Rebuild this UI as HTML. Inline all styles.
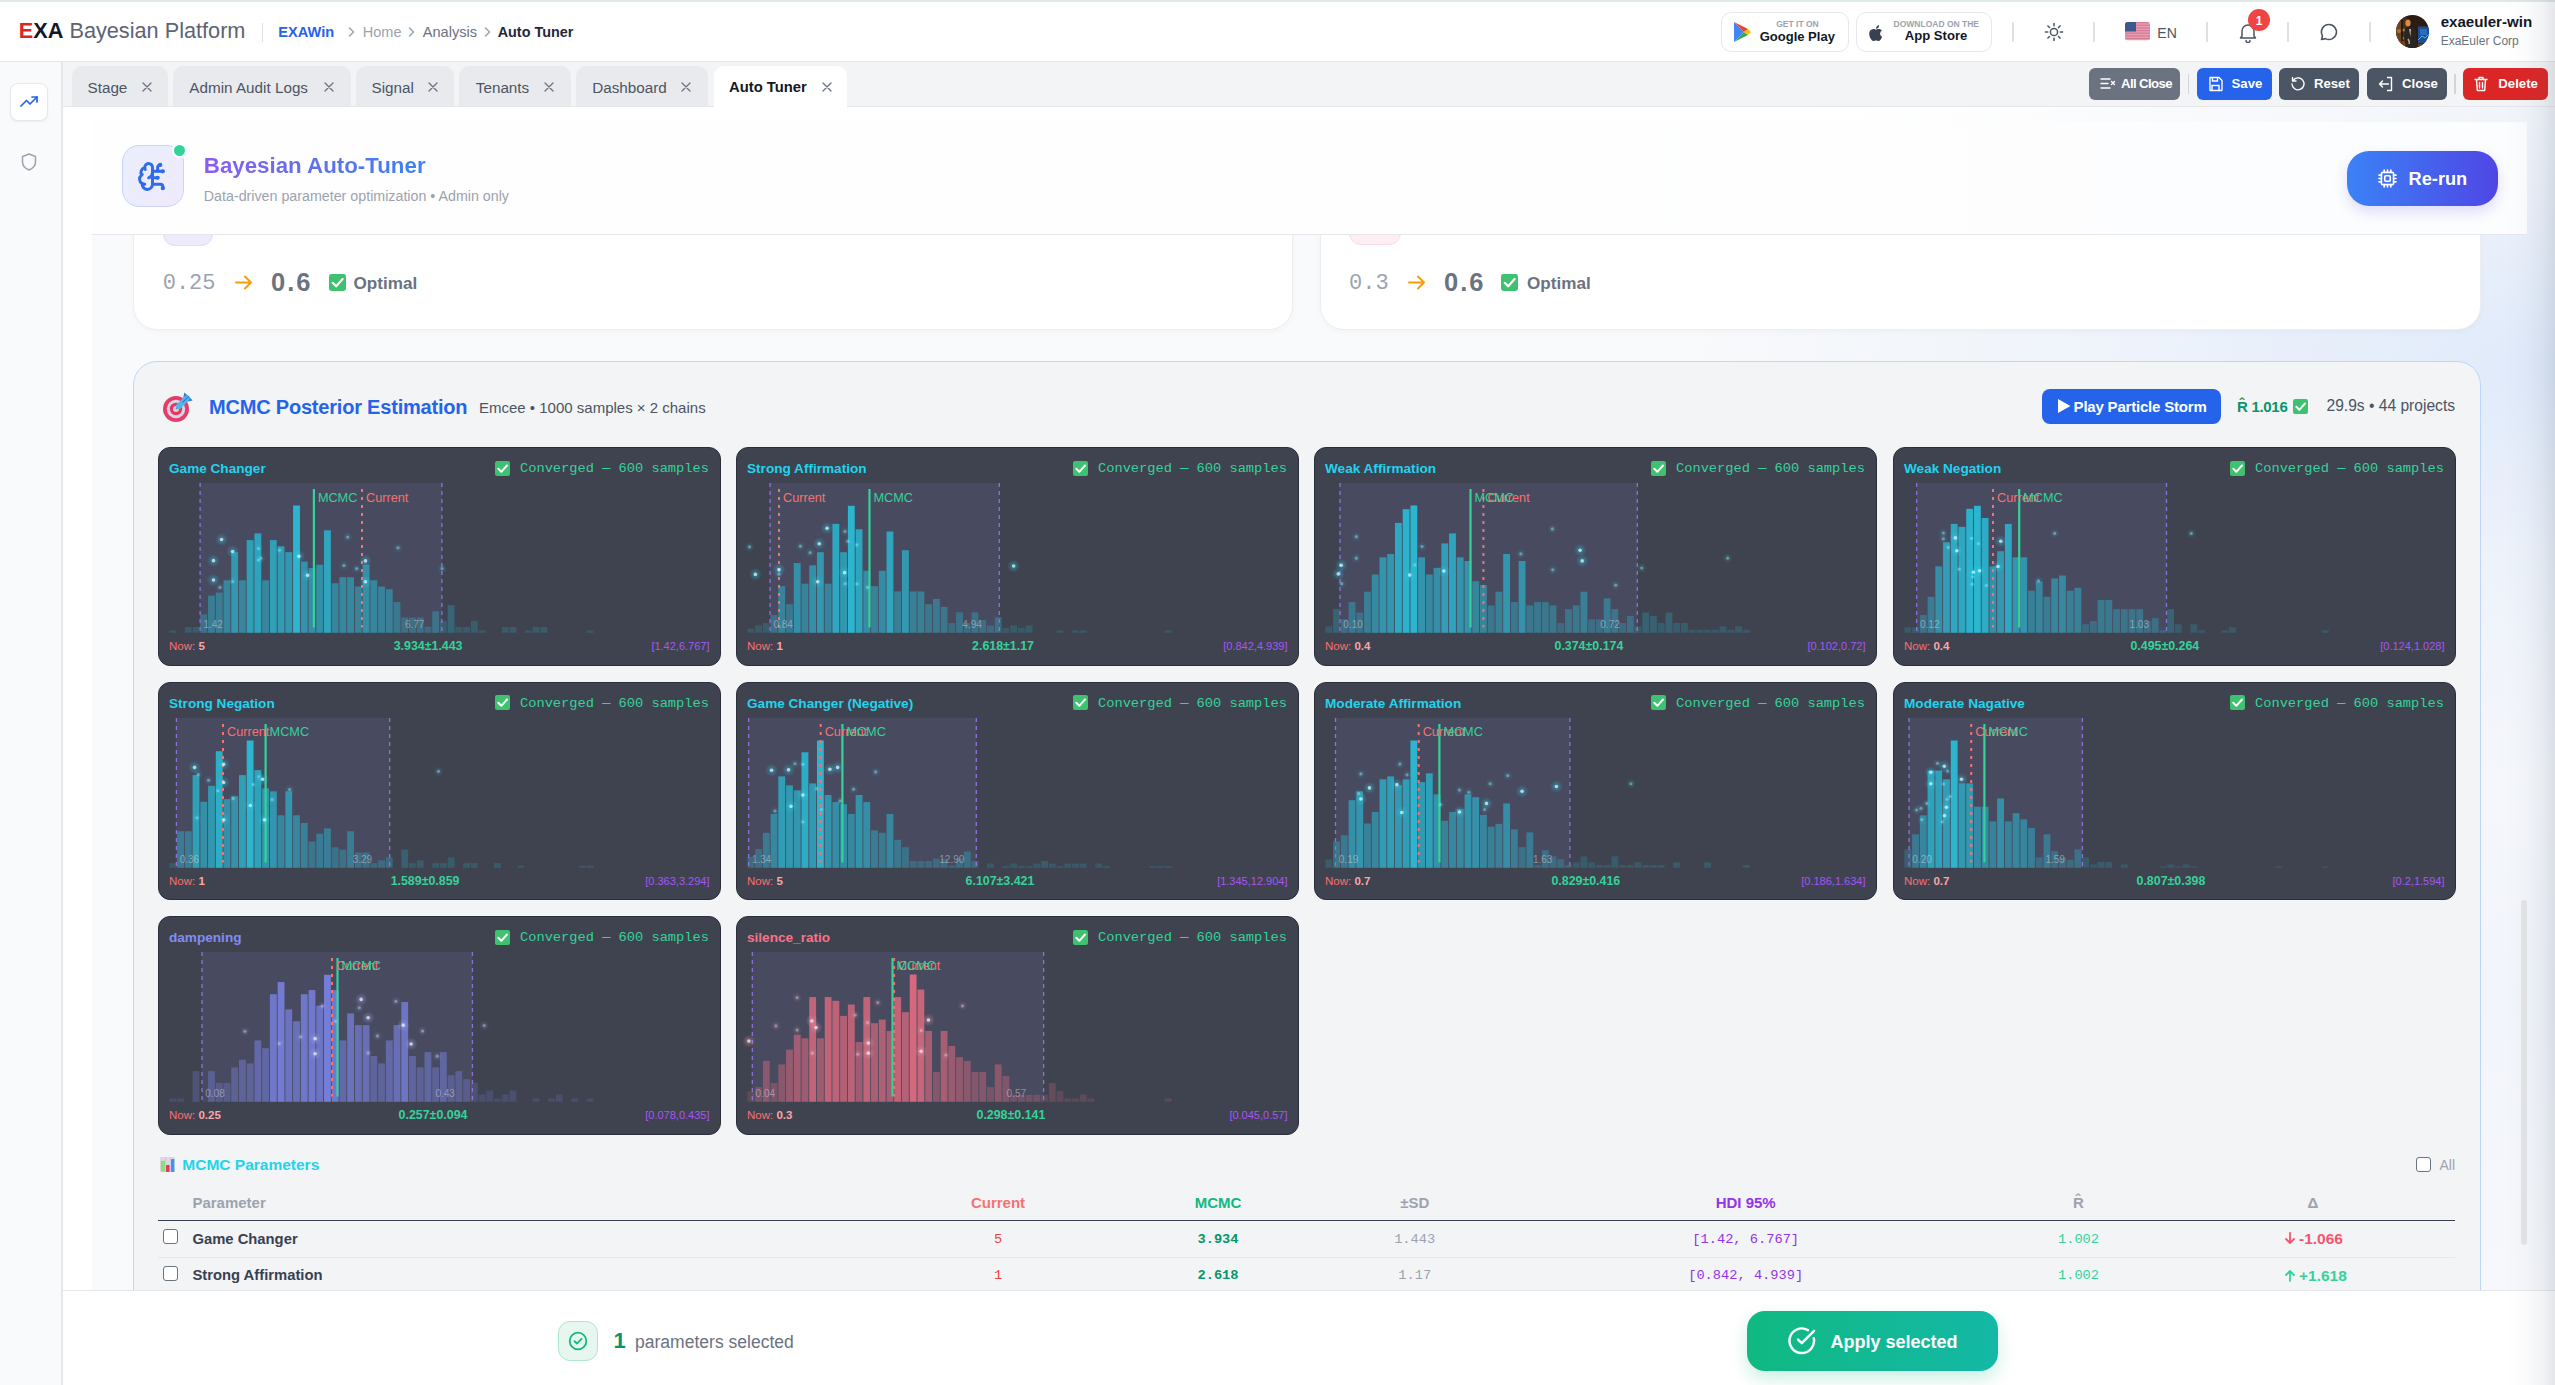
<!DOCTYPE html>
<html><head><meta charset="utf-8"><style>
*{box-sizing:border-box;margin:0;padding:0}
html,body{width:2555px;height:1385px;overflow:hidden;background:#fff;font-family:"Liberation Sans",sans-serif;color:#111827}
.a{position:absolute}
.t{position:absolute;white-space:nowrap;line-height:1}
.mono{font-family:"Liberation Mono",monospace}
.tab{position:absolute;top:66px;height:40px;background:#e9eaee;border-radius:10px 10px 0 0}
.tab.act{background:#fff;height:41px}
.btn{position:absolute;top:68px;height:32px;border-radius:6px}
.sep{position:absolute;width:2px;background:#d9dce1}
.card{position:absolute;width:563px;height:218.5px;background:#3f4350;border:1px solid #2a2f3a;border-radius:12px;overflow:hidden}
</style></head>
<body>
<div class="a" style="left:0px;top:0px;width:2555px;height:2px;background:#dfe8e4"></div>
<div class="a" style="left:0px;top:2px;width:2555px;height:59px;background:#fff"></div>
<div class="a" style="left:0px;top:61px;width:2555px;height:1px;background:#e5e7eb"></div>
<div class="t" style="left:18.80px;top:20.33px;font-size:21.7px;"><b style="color:#dc2626">E</b><b style="color:#111827">XA</b><span style="color:#5b6472"> Bayesian Platform</span></div>
<div class="a" style="left:262px;top:23px;width:1.3px;height:19px;background:#dcdfe4"></div>
<div class="t" style="left:278.30px;top:25.14px;font-size:14.6px;color:#2563eb"><b>EXAWin</b></div>
<svg class="a" style="left:347.7px;top:26.5px;" width="7" height="10" viewBox="0 0 7 10"><path d="M1.5 1 L5.5 5 L1.5 9" fill="none" stroke="#9ca3af" stroke-width="1.5" stroke-linecap="round" stroke-linejoin="round"/></svg>
<svg class="a" style="left:407.9px;top:26.5px;" width="7" height="10" viewBox="0 0 7 10"><path d="M1.5 1 L5.5 5 L1.5 9" fill="none" stroke="#9ca3af" stroke-width="1.5" stroke-linecap="round" stroke-linejoin="round"/></svg>
<svg class="a" style="left:484.3px;top:26.5px;" width="7" height="10" viewBox="0 0 7 10"><path d="M1.5 1 L5.5 5 L1.5 9" fill="none" stroke="#9ca3af" stroke-width="1.5" stroke-linecap="round" stroke-linejoin="round"/></svg>
<div class="t" style="left:362.80px;top:25.23px;font-size:14.5px;color:#9ca3af">Home</div>
<div class="t" style="left:422.70px;top:25.14px;font-size:14.6px;color:#6b7280">Analysis</div>
<div class="t" style="left:497.70px;top:25.31px;font-size:14.4px;color:#1f2937"><b>Auto Tuner</b></div>
<div class="a" style="left:1721px;top:12px;width:128px;height:39.5px;border:1px solid #e5e7eb;border-radius:10px;background:#fff"></div>
<div class="a" style="left:1856px;top:12px;width:135.5px;height:39.5px;border:1px solid #e5e7eb;border-radius:10px;background:#fff"></div>
<svg class="a" style="left:1734px;top:22px;" width="17" height="20" viewBox="0 0 17 20"><path d="M0 0 L10 10 L0 20 Z" fill="#4285f4"/><path d="M0 0 L14 7 L10 10 Z" fill="#ea4335"/><path d="M0 20 L14 13 L10 10 Z" fill="#34a853"/><path d="M14 7 L17 10 L14 13 L10 10 Z" fill="#fbbc04"/></svg>
<div class="t" style="left:1797.50px;transform:translateX(-50%);top:20.10px;font-size:8.5px;color:#9ca3af"><b>GET IT ON</b></div>
<div class="t" style="left:1797.30px;transform:translateX(-50%);top:29.50px;font-size:13px;color:#111827"><b>Google Play</b></div>
<svg class="a" style="left:1869px;top:23px;" width="14" height="19" viewBox="0 0 14 19"><path d="M11.2 10.6c0-2 1.6-2.9 1.7-3-0.9-1.4-2.4-1.6-2.9-1.6-1.2-0.1-2.4 0.7-3 0.7-0.6 0-1.6-0.7-2.6-0.7C2.9 6.1 1.6 6.9 0.9 8.1c-1.4 2.4-0.4 6 1 8 0.7 1 1.5 2 2.5 2 1 0 1.4-0.6 2.600-0.6s1.5 0.6 2.6 0.6c1.1 0 1.800-1 2.4-2 0.8-1.100 1.100-2.2 1.1-2.3-0.1 0-2-0.8-2.1-3.2z" fill="#374151"/><path d="M9.300 4.700c0.5-0.7 0.9-1.6 0.8-2.500-0.8 0-1.700 0.5-2.300 1.200-0.5 0.600-0.900 1.500-0.800 2.400 0.900 0.100 1.700-0.400 2.300-1.100z" fill="#374151"/></svg>
<div class="t" style="left:1936.30px;transform:translateX(-50%);top:20.10px;font-size:8.5px;color:#9ca3af"><b>DOWNLOAD ON THE</b></div>
<div class="t" style="left:1936.00px;transform:translateX(-50%);top:29.41px;font-size:13.1px;color:#111827"><b>App Store</b></div>
<div class="a" style="left:2012.25px;top:22px;width:1.5px;height:20px;background:#dde0e5"></div>
<div class="a" style="left:2093.25px;top:22px;width:1.5px;height:20px;background:#dde0e5"></div>
<div class="a" style="left:2206.25px;top:22px;width:1.5px;height:20px;background:#dde0e5"></div>
<div class="a" style="left:2287.25px;top:22px;width:1.5px;height:20px;background:#dde0e5"></div>
<div class="a" style="left:2369.25px;top:22px;width:1.5px;height:20px;background:#dde0e5"></div>
<svg class="a" style="left:2044px;top:22px;" width="20" height="20" viewBox="0 0 20 20"><circle cx="10" cy="10" r="3.6" fill="none" stroke="#4b5563" stroke-width="1.5"/><line x1="16.30" y1="10.00" x2="18.60" y2="10.00" stroke="#4b5563" stroke-width="1.5" stroke-linecap="round"/><line x1="14.45" y1="14.45" x2="16.08" y2="16.08" stroke="#4b5563" stroke-width="1.5" stroke-linecap="round"/><line x1="10.00" y1="16.30" x2="10.00" y2="18.60" stroke="#4b5563" stroke-width="1.5" stroke-linecap="round"/><line x1="5.55" y1="14.45" x2="3.92" y2="16.08" stroke="#4b5563" stroke-width="1.5" stroke-linecap="round"/><line x1="3.70" y1="10.00" x2="1.40" y2="10.00" stroke="#4b5563" stroke-width="1.5" stroke-linecap="round"/><line x1="5.55" y1="5.55" x2="3.92" y2="3.92" stroke="#4b5563" stroke-width="1.5" stroke-linecap="round"/><line x1="10.00" y1="3.70" x2="10.00" y2="1.40" stroke="#4b5563" stroke-width="1.5" stroke-linecap="round"/><line x1="14.45" y1="5.55" x2="16.08" y2="3.92" stroke="#4b5563" stroke-width="1.5" stroke-linecap="round"/></svg>
<svg class="a" style="left:2125px;top:22.3px;" width="25" height="18.5" viewBox="0 0 25 18.5"><defs><clipPath id="fc"><rect x="0" y="0" width="25" height="18.5" rx="3"/></clipPath></defs><g clip-path="url(#fc)"><rect width="25" height="18.5" fill="#e8a0b4"/><rect y="0.00" width="25" height="1.32" fill="#d77a93"/><rect y="2.64" width="25" height="1.32" fill="#d77a93"/><rect y="5.28" width="25" height="1.32" fill="#d77a93"/><rect y="7.92" width="25" height="1.32" fill="#d77a93"/><rect y="10.56" width="25" height="1.32" fill="#d77a93"/><rect y="13.20" width="25" height="1.32" fill="#d77a93"/><rect y="15.84" width="25" height="1.32" fill="#d77a93"/><rect width="11" height="9.5" fill="#3c5a8c"/></g></svg>
<div class="t" style="left:2157.30px;top:25.65px;font-size:14px;color:#4b5563">EN</div>
<svg class="a" style="left:2238px;top:22px;" width="20" height="21" viewBox="0 0 20 21"><path d="M4 14 L4 9 A6 6 0 0 1 16 9 L16 14 L17.5 16 L2.5 16 Z" fill="none" stroke="#4b5563" stroke-width="1.5" stroke-linejoin="round"/><path d="M8 18.5 A2 2 0 0 0 12 18.5" fill="none" stroke="#4b5563" stroke-width="1.5" stroke-linecap="round"/></svg>
<div class="a" style="left:2248px;top:9px;width:22px;height:22px;background:#ef4444;border-radius:50%"></div>
<div class="t" style="left:2259.00px;transform:translateX(-50%);top:15.14px;font-size:12px;color:#fff"><b>1</b></div>
<svg class="a" style="left:2319px;top:22px;" width="20" height="20" viewBox="0 0 20 20"><path d="M10 2.5 A7.5 7.5 0 1 1 6.4 16.6 L2.5 17.5 L3.5 13.8 A7.5 7.5 0 0 1 10 2.5 Z" fill="none" stroke="#4b5563" stroke-width="1.6" stroke-linejoin="round"/></svg>
<svg class="a" style="left:2396px;top:15px;" width="33" height="33" viewBox="0 0 33 33"><defs><clipPath id="avc"><circle cx="16.5" cy="16.5" r="16.5"/></clipPath></defs><g clip-path="url(#avc)"><rect width="33" height="33" fill="#2a1c12"/><rect x="0" y="0" width="5" height="33" fill="#6a4524"/><rect x="7" y="0" width="4" height="33" fill="#4a3019"/><circle cx="3" cy="16" r="2" fill="#c98a40" opacity=".7"/><circle cx="8" cy="15" r="1.5" fill="#d9a050" opacity=".7"/><circle cx="8" cy="23" r="1.5" fill="#c98a40" opacity=".6"/><rect x="0" y="26" width="10" height="7" fill="#8a4a1a" opacity=".7"/><ellipse cx="12" cy="8" rx="2.6" ry="3.5" fill="#d98a4a"/><path d="M9 13 L16 12 L20 16 L21 33 L10 33 L8 22 Z" fill="#2b2522"/><path d="M13 14 L15 14 L14.5 22 Z" fill="#d8d0c0" opacity=".8"/><path d="M12 24 q2 3 1 5" stroke="#f0e0c0" stroke-width="1.5" fill="none" opacity=".7"/><rect x="22" y="11.5" width="11" height="17" fill="#1b4f95"/><rect x="24" y="14" width="7" height="6" fill="#2d76c8" opacity=".8"/><path d="M22 25 L26 21 L29 23 L33 19" stroke="#5ab0f0" stroke-width="1" fill="none"/><rect x="22" y="29" width="11" height="4" fill="#7a4a20" opacity=".8"/></g></svg>
<div class="t" style="left:2440.70px;top:13.92px;font-size:15.1px;color:#111827"><b>exaeuler-win</b></div>
<div class="t" style="left:2440.70px;top:35.44px;font-size:12px;color:#6b7280">ExaEuler Corp</div>
<div class="a" style="left:0px;top:62px;width:62px;height:1323px;background:#f9fafb"></div>
<div class="a" style="left:61px;top:62px;width:2px;height:1323px;background:#e5e7eb"></div>
<div class="a" style="left:63px;top:62px;width:2492px;height:45px;background:#f3f4f6"></div>
<div class="a" style="left:63px;top:106px;width:2492px;height:1px;background:#e5e7eb"></div>
<div class="tab" style="left:72px;width:96.0px"></div>
<div class="t" style="left:87.50px;top:79.69px;font-size:15.25px;color:#4b5563">Stage</div>
<svg class="a" style="left:142.3px;top:81.5px;" width="10" height="10" viewBox="0 0 10 10"><path d="M1 1 L9 9 M9 1 L1 9" stroke="#6b7280" stroke-width="1.3" stroke-linecap="round"/></svg>
<div class="tab" style="left:173px;width:177.5px"></div>
<div class="t" style="left:189.30px;top:79.69px;font-size:15.25px;color:#4b5563">Admin Audit Logs</div>
<svg class="a" style="left:324.3px;top:81.5px;" width="10" height="10" viewBox="0 0 10 10"><path d="M1 1 L9 9 M9 1 L1 9" stroke="#6b7280" stroke-width="1.3" stroke-linecap="round"/></svg>
<div class="tab" style="left:356px;width:98.0px"></div>
<div class="t" style="left:371.50px;top:79.69px;font-size:15.25px;color:#4b5563">Signal</div>
<svg class="a" style="left:428.2px;top:81.5px;" width="10" height="10" viewBox="0 0 10 10"><path d="M1 1 L9 9 M9 1 L1 9" stroke="#6b7280" stroke-width="1.3" stroke-linecap="round"/></svg>
<div class="tab" style="left:459px;width:112.0px"></div>
<div class="t" style="left:475.80px;top:79.69px;font-size:15.25px;color:#4b5563">Tenants</div>
<svg class="a" style="left:544px;top:81.5px;" width="10" height="10" viewBox="0 0 10 10"><path d="M1 1 L9 9 M9 1 L1 9" stroke="#6b7280" stroke-width="1.3" stroke-linecap="round"/></svg>
<div class="tab" style="left:576px;width:131.5px"></div>
<div class="t" style="left:592.20px;top:79.69px;font-size:15.25px;color:#4b5563">Dashboard</div>
<svg class="a" style="left:681.2px;top:81.5px;" width="10" height="10" viewBox="0 0 10 10"><path d="M1 1 L9 9 M9 1 L1 9" stroke="#6b7280" stroke-width="1.3" stroke-linecap="round"/></svg>
<div class="tab act" style="left:714px;width:133.4px"></div>
<div class="t" style="left:729.00px;top:80.07px;font-size:14.8px;color:#111827"><b>Auto Tuner</b></div>
<svg class="a" style="left:822.1px;top:81.5px;" width="10" height="10" viewBox="0 0 10 10"><path d="M1 1 L9 9 M9 1 L1 9" stroke="#6b7280" stroke-width="1.3" stroke-linecap="round"/></svg>
<div class="btn" style="left:2089px;width:91px;background:#6b7280"></div>
<svg class="a" style="left:2100px;top:76px;" width="16" height="16" viewBox="0 0 16 16"><path d="M1 3h9M1 7.5h7M1 12h9M11.5 5.5l3 3M14.5 5.5l-3 3" stroke="#fff" stroke-width="1.4" stroke-linecap="round" fill="none"/></svg>
<div class="t" style="left:2121.00px;top:77.33px;font-size:13.2px;color:#fff;letter-spacing:-0.6px"><b>All Close</b></div>
<div class="btn" style="left:2197px;width:75px;background:#2563eb"></div>
<svg class="a" style="left:2208px;top:76px;" width="16" height="16" viewBox="0 0 16 16"><path d="M2 1.5h9l3 3v9.5a0.5 0.5 0 0 1-0.5 0.5h-11a0.5 0.5 0 0 1-0.5-0.5z" fill="none" stroke="#fff" stroke-width="1.4" stroke-linejoin="round"/><path d="M4.5 1.5v3.5h5v-3.5M4 14.5v-5h7v5" fill="none" stroke="#fff" stroke-width="1.4"/></svg>
<div class="t" style="left:2231.50px;top:77.33px;font-size:13.2px;color:#fff;letter-spacing:0"><b>Save</b></div>
<div class="btn" style="left:2279px;width:80px;background:#4b5563"></div>
<svg class="a" style="left:2290px;top:76px;" width="16" height="16" viewBox="0 0 16 16"><path d="M3 4.5A6 6 0 1 1 2 8" fill="none" stroke="#fff" stroke-width="1.4" stroke-linecap="round"/><path d="M2.5 1.5v3.5h3.5" fill="none" stroke="#fff" stroke-width="1.4" stroke-linecap="round" stroke-linejoin="round"/></svg>
<div class="t" style="left:2313.90px;top:77.33px;font-size:13.2px;color:#fff;letter-spacing:0"><b>Reset</b></div>
<div class="btn" style="left:2367px;width:80px;background:#4b5563"></div>
<svg class="a" style="left:2378px;top:76px;" width="16" height="16" viewBox="0 0 16 16"><path d="M9 1.5h4.5v13H9" fill="none" stroke="#fff" stroke-width="1.4" stroke-linejoin="round"/><path d="M10.5 8H1.5M4.5 5L1.5 8l3 3" fill="none" stroke="#fff" stroke-width="1.4" stroke-linecap="round" stroke-linejoin="round"/></svg>
<div class="t" style="left:2402.00px;top:77.33px;font-size:13.2px;color:#fff;letter-spacing:0"><b>Close</b></div>
<div class="btn" style="left:2463px;width:85px;background:#dc2626"></div>
<svg class="a" style="left:2474px;top:76px;" width="16" height="16" viewBox="0 0 16 16"><path d="M1 3.5h12M5 3.5V1.5h4v2M2.5 3.5l0.8 11h7.4l0.8-11M5.5 6.5v5.5M8.5 6.5v5.5" fill="none" stroke="#fff" stroke-width="1.4" stroke-linecap="round" stroke-linejoin="round"/></svg>
<div class="t" style="left:2498.30px;top:77.33px;font-size:13.2px;color:#fff;letter-spacing:0"><b>Delete</b></div>
<div class="a" style="left:2187.5px;top:74px;width:1.5px;height:20px;background:#d1d5db"></div>
<div class="a" style="left:2454px;top:74px;width:1.5px;height:20px;background:#d1d5db"></div>
<div class="a" style="left:10px;top:82.5px;width:38px;height:38.5px;background:#fff;border:1px solid #e5e7eb;border-radius:8px;box-shadow:0 1px 2px rgba(0,0,0,.06)"></div>
<svg class="a" style="left:20px;top:94px;" width="18" height="14" viewBox="0 0 18 14"><path d="M1 12 L6.5 6.5 L10 10 L17 3" fill="none" stroke="#2563eb" stroke-width="1.7" stroke-linecap="round" stroke-linejoin="round"/><path d="M12 3 H17 V8" fill="none" stroke="#2563eb" stroke-width="1.7" stroke-linecap="round" stroke-linejoin="round"/></svg>
<svg class="a" style="left:21px;top:153px;" width="16" height="18" viewBox="0 0 16 18"><path d="M8 1 L14.5 3.5 V9 C14.5 13 11.5 15.5 8 17 C4.5 15.5 1.5 13 1.5 9 V3.5 Z" fill="none" stroke="#9ca3af" stroke-width="1.5" stroke-linejoin="round"/></svg>
<div class="a" style="left:63px;top:107px;width:2492px;height:1183px;background:#fff"></div>
<div class="a" style="left:92px;top:107px;width:2463px;height:1183px;background:radial-gradient(ellipse 900px 420px at 100% 22%,rgba(214,228,250,0.75) 0%,rgba(214,228,250,0.35) 45%,rgba(214,228,250,0) 100%),radial-gradient(ellipse 700px 500px at 100% 75%,rgba(225,235,252,0.35) 0%,rgba(225,235,252,0) 100%),linear-gradient(90deg,#f9fafb 0%,#fafafb 100%)"></div>
<div class="a" style="left:92px;top:107px;width:2435px;height:15px;background:linear-gradient(90deg,#fff 0%,#fff 70%,rgba(255,255,255,0) 100%)"></div>
<div class="a" style="left:133px;top:150px;width:1160px;height:180px;background:#fff;border:1px solid #eceef2;border-radius:24px;box-shadow:0 2px 6px rgba(0,0,0,.03)"></div>
<div class="a" style="left:1320px;top:150px;width:1161px;height:180px;background:#fff;border:1px solid #eceef2;border-radius:24px;box-shadow:0 2px 6px rgba(0,0,0,.03)"></div>
<div class="a" style="left:162.7px;top:200px;width:50.5px;height:45.5px;background:#efeafb;border:1px solid #e2dbf7;border-radius:12px"></div>
<div class="a" style="left:1349px;top:200px;width:51.7px;height:45px;background:#fdeef2;border:1px solid #f8dbe3;border-radius:12px"></div>
<div class="t mono" style="left:162.70px;top:273.38px;font-size:22px;color:#9ca3af">0.25</div>
<svg class="a" style="left:234.8px;top:275.2px;" width="18" height="15" viewBox="0 0 18 15"><path d="M1 7.5 H16 M10 1.5 L16 7.5 L10 13.5" fill="none" stroke="#f59e0b" stroke-width="2" stroke-linecap="round" stroke-linejoin="round"/></svg>
<div class="t" style="left:271.00px;top:269.61px;font-size:25.5px;color:#6b7280;letter-spacing:2px"><b>0.6</b></div>
<svg class="a" style="left:329px;top:274.3px;" width="17" height="17" viewBox="0 0 17 17"><rect x="0" y="0" width="17" height="17" rx="2.38" fill="#3fc26f"/><path d="M3.74 8.84 L7.14 12.24 L13.60 5.10" fill="none" stroke="#fff" stroke-width="2.21" stroke-linecap="round" stroke-linejoin="round"/></svg>
<div class="t" style="left:353.50px;top:275.02px;font-size:17.1px;color:#6b7280"><b>Optimal</b></div>
<div class="t mono" style="left:1349.00px;top:273.38px;font-size:22px;color:#9ca3af">0.3</div>
<svg class="a" style="left:1408px;top:275.2px;" width="18" height="15" viewBox="0 0 18 15"><path d="M1 7.5 H16 M10 1.5 L16 7.5 L10 13.5" fill="none" stroke="#f59e0b" stroke-width="2" stroke-linecap="round" stroke-linejoin="round"/></svg>
<div class="t" style="left:1444.00px;top:269.61px;font-size:25.5px;color:#6b7280;letter-spacing:2px"><b>0.6</b></div>
<svg class="a" style="left:1501.4px;top:274.3px;" width="17" height="17" viewBox="0 0 17 17"><rect x="0" y="0" width="17" height="17" rx="2.38" fill="#3fc26f"/><path d="M3.74 8.84 L7.14 12.24 L13.60 5.10" fill="none" stroke="#fff" stroke-width="2.21" stroke-linecap="round" stroke-linejoin="round"/></svg>
<div class="t" style="left:1527.00px;top:275.02px;font-size:17.1px;color:#6b7280"><b>Optimal</b></div>
<div class="a" style="left:92px;top:122px;width:2435px;height:112px;background:linear-gradient(90deg,#fefefe 0%,#fefefe 60%,#fcfdfe 100%)"></div>
<div class="a" style="left:92px;top:234px;width:2435px;height:1px;background:#e5e7eb"></div>
<div class="a" style="left:122px;top:145px;width:62px;height:61.5px;border-radius:17px;border:1px solid #c9d3fb;background:linear-gradient(135deg,#e9eefc 0%,#efeafc 100%)"></div>
<svg class="a" style="left:137px;top:160.5px;" width="31" height="31" viewBox="0 0 24 24"><g fill="none" stroke="#2f6bea" stroke-width="2.3" stroke-linecap="round" stroke-linejoin="round"><path d="M12 5a3 3 0 1 0-5.997.125 4 4 0 0 0-2.526 5.77 4 4 0 0 0 .556 6.588A4 4 0 1 0 12 18Z"/><path d="M9 13a4.5 4.5 0 0 0 3-4"/><path d="M6.003 5.125A3 3 0 0 0 6.401 6.5"/><path d="M3.477 10.896a4 4 0 0 1 .585-.396"/><path d="M6 18a4 4 0 0 1-1.967-.516"/><path d="M12 13h4"/><path d="M12 18h6a2 2 0 0 1 2 2v1"/><path d="M12 8h8"/><path d="M16 8V5a2 2 0 0 1 2-2"/><circle cx="16" cy="13" r=".5"/><circle cx="18" cy="3" r=".5"/><circle cx="20" cy="21" r=".5"/><circle cx="20" cy="8" r=".5"/></g></svg>
<div class="a" style="left:171.5px;top:142.5px;width:15px;height:15px;border-radius:50%;background:#34d399;border:2px solid #fff"></div>
<div class="t" style="left:203.80px;top:155.12px;font-size:22.3px;background:linear-gradient(90deg,#8b5cf6 0%,#6470e8 45%,#3b82f6 100%);-webkit-background-clip:text;background-clip:text;color:transparent;padding-bottom:3px"><b>Bayesian Auto-Tuner</b></div>
<div class="t" style="left:203.80px;top:188.93px;font-size:14.26px;color:#9ca3af">Data-driven parameter optimization • Admin only</div>
<div class="a" style="left:2347px;top:151px;width:151px;height:54.5px;border-radius:22px;background:linear-gradient(90deg,#3b82f6 0%,#4f46e5 100%);box-shadow:0 6px 14px rgba(79,70,229,.18)"></div>
<svg class="a" style="left:2377.5px;top:168.5px;" width="19" height="19" viewBox="0 0 20 20"><g fill="none" stroke="#fff" stroke-width="1.7" stroke-linejoin="round" stroke-linecap="round"><rect x="3.6" y="3.6" width="12.8" height="12.8" rx="1.5"/><rect x="7.1" y="7.1" width="5.8" height="5.8" rx="1"/><path d="M6.5 1v2.6M10 1v2.6M13.5 1v2.6M6.5 16.4V19M10 16.4V19M13.5 16.4V19M1 6.5h2.6M1 10h2.6M1 13.5h2.6M16.4 6.5H19M16.4 10H19M16.4 13.5H19"/></g></svg>
<div class="t" style="left:2408.60px;top:170.09px;font-size:18.2px;color:#fff"><b>Re-run</b></div>
<div class="a" style="left:133px;top:361.4px;width:2348px;height:1000px;background:#f3f4f6;border:1px solid #bfd6fb;border-radius:24px"></div>
<svg class="a" style="left:163px;top:392px;" width="30" height="30" viewBox="0 0 30 30"><circle cx="13" cy="17" r="13" fill="#e63c68"/><circle cx="13" cy="17" r="9.2" fill="#d8d4e8"/><circle cx="13" cy="17" r="6.2" fill="#e8365f"/><circle cx="13" cy="17" r="3" fill="#d8d4e8"/><line x1="13" y1="17" x2="16" y2="14" stroke="#7b7b8c" stroke-width="1.6"/><path d="M19.5 9.5 L21.3 0.6 L25.5 4.2 Z" fill="#2f7fe2"/><path d="M20.5 10.5 L29.6 8.6 L26 4.4 Z" fill="#2f7fe2"/><line x1="15.6" y1="14.4" x2="23.6" y2="6.4" stroke="#4fb8ec" stroke-width="5.6" stroke-linecap="round"/><line x1="20" y1="10" x2="25.5" y2="4.5" stroke="#2f7fe2" stroke-width="1.3" stroke-linecap="round"/></svg>
<div class="t" style="left:209.00px;top:397.47px;font-size:20px;color:#2563eb;letter-spacing:-0.2px"><b>MCMC Posterior Estimation</b></div>
<div class="t" style="left:479.00px;top:399.50px;font-size:15px;color:#4b5563">Emcee • 1000 samples × 2 chains</div>
<div class="a" style="left:2041.6px;top:389px;width:179.8px;height:34.5px;background:#2563eb;border-radius:8px"></div>
<svg class="a" style="left:2057.5px;top:399px;" width="12.5" height="14" viewBox="0 0 12.5 14"><path d="M0 0 L12.5 7 L0 14 Z" fill="#fff"/></svg>
<div class="t" style="left:2073.60px;top:398.70px;font-size:15px;color:#fff;letter-spacing:-0.2px"><b>Play Particle Storm</b></div>
<div class="t" style="left:2237.00px;top:398.70px;font-size:15px;color:#059669;letter-spacing:-0.3px"><b>R&#770; 1.016</b></div>
<svg class="a" style="left:2293px;top:399px;" width="15" height="15" viewBox="0 0 15 15"><rect x="0" y="0" width="15" height="15" rx="2.10" fill="#3fc26f"/><path d="M3.30 7.80 L6.30 10.80 L12.00 4.50" fill="none" stroke="#fff" stroke-width="1.95" stroke-linecap="round" stroke-linejoin="round"/></svg>
<div class="t" style="left:2326.50px;top:398.19px;font-size:15.6px;color:#4b5563">29.9s • 44 projects</div>
<div class="card" style="left:158px;top:447.2px"></div>
<div class="t" style="left:169.00px;top:462.29px;font-size:13.6px;color:#22d3ee"><b>Game Changer</b></div>
<svg class="a" style="left:494.5px;top:460.8px;" width="15" height="15" viewBox="0 0 15 15"><rect x="0" y="0" width="15" height="15" rx="2.10" fill="#3fc26f"/><path d="M3.30 7.80 L6.30 10.80 L12.00 4.50" fill="none" stroke="#fff" stroke-width="1.95" stroke-linecap="round" stroke-linejoin="round"/></svg>
<div class="t mono" style="left:520.00px;top:462.20px;font-size:13.7px;color:#34d399">Converged — 600 samples</div>
<svg class="a" style="left:158px;top:447.2px;" width="563" height="218" viewBox="0 0 563 218"><defs><radialGradient id="halocyan"><stop offset="0" stop-color="rgb(34,211,238)" stop-opacity="0.45"/><stop offset="1" stop-color="rgb(34,211,238)" stop-opacity="0"/></radialGradient></defs><rect x="42.10" y="36" width="241.80" height="149.80" fill="#4a4b62" fill-opacity="0.85"/><rect x="11.40" y="183.30" width="6.85" height="2.50" fill="rgb(34,211,238)" fill-opacity="0.152"/><rect x="26.86" y="180.00" width="6.85" height="5.80" fill="rgb(34,211,238)" fill-opacity="0.163"/><rect x="34.59" y="180.00" width="6.85" height="5.80" fill="rgb(34,211,238)" fill-opacity="0.163"/><rect x="42.32" y="167.40" width="6.85" height="18.40" fill="rgb(34,211,238)" fill-opacity="0.284"/><rect x="50.05" y="148.60" width="6.85" height="37.20" fill="rgb(34,211,238)" fill-opacity="0.369"/><rect x="57.78" y="145.50" width="6.85" height="40.30" fill="rgb(34,211,238)" fill-opacity="0.384"/><rect x="65.51" y="133.30" width="6.85" height="52.50" fill="rgb(34,211,238)" fill-opacity="0.439"/><rect x="73.24" y="105.20" width="6.85" height="80.60" fill="rgb(34,211,238)" fill-opacity="0.567"/><rect x="80.97" y="133.30" width="6.85" height="52.50" fill="rgb(34,211,238)" fill-opacity="0.439"/><rect x="88.70" y="93.10" width="6.85" height="92.70" fill="rgb(34,211,238)" fill-opacity="0.622"/><rect x="96.43" y="86.40" width="6.85" height="99.40" fill="rgb(34,211,238)" fill-opacity="0.653"/><rect x="104.16" y="133.30" width="6.85" height="52.50" fill="rgb(34,211,238)" fill-opacity="0.439"/><rect x="111.89" y="93.10" width="6.85" height="92.70" fill="rgb(34,211,238)" fill-opacity="0.622"/><rect x="119.62" y="99.30" width="6.85" height="86.50" fill="rgb(34,211,238)" fill-opacity="0.594"/><rect x="127.35" y="105.20" width="6.85" height="80.60" fill="rgb(34,211,238)" fill-opacity="0.567"/><rect x="135.08" y="58.50" width="6.85" height="127.30" fill="rgb(34,211,238)" fill-opacity="0.780"/><rect x="142.81" y="114.60" width="6.85" height="71.20" fill="rgb(34,211,238)" fill-opacity="0.524"/><rect x="150.54" y="121.00" width="6.85" height="64.80" fill="rgb(34,211,238)" fill-opacity="0.495"/><rect x="158.27" y="117.70" width="6.85" height="68.10" fill="rgb(34,211,238)" fill-opacity="0.510"/><rect x="166.00" y="83.30" width="6.85" height="102.50" fill="rgb(34,211,238)" fill-opacity="0.667"/><rect x="173.73" y="136.30" width="6.85" height="49.50" fill="rgb(34,211,238)" fill-opacity="0.426"/><rect x="181.46" y="130.20" width="6.85" height="55.60" fill="rgb(34,211,238)" fill-opacity="0.453"/><rect x="189.19" y="130.20" width="6.85" height="55.60" fill="rgb(34,211,238)" fill-opacity="0.453"/><rect x="196.92" y="139.50" width="6.85" height="46.30" fill="rgb(34,211,238)" fill-opacity="0.411"/><rect x="204.65" y="117.70" width="6.85" height="68.10" fill="rgb(34,211,238)" fill-opacity="0.510"/><rect x="212.38" y="133.30" width="6.85" height="52.50" fill="rgb(34,211,238)" fill-opacity="0.439"/><rect x="220.11" y="139.50" width="6.85" height="46.30" fill="rgb(34,211,238)" fill-opacity="0.411"/><rect x="227.84" y="142.20" width="6.85" height="43.60" fill="rgb(34,211,238)" fill-opacity="0.399"/><rect x="235.57" y="155.10" width="6.85" height="30.70" fill="rgb(34,211,238)" fill-opacity="0.340"/><rect x="243.30" y="170.50" width="6.85" height="15.30" fill="rgb(34,211,238)" fill-opacity="0.270"/><rect x="251.03" y="170.50" width="6.85" height="15.30" fill="rgb(34,211,238)" fill-opacity="0.270"/><rect x="258.76" y="170.50" width="6.85" height="15.30" fill="rgb(34,211,238)" fill-opacity="0.270"/><rect x="266.49" y="179.70" width="6.85" height="6.10" fill="rgb(34,211,238)" fill-opacity="0.228"/><rect x="274.22" y="164.30" width="6.85" height="21.50" fill="rgb(34,211,238)" fill-opacity="0.298"/><rect x="281.95" y="173.90" width="6.85" height="11.90" fill="rgb(34,211,238)" fill-opacity="0.183"/><rect x="289.68" y="158.20" width="6.85" height="27.60" fill="rgb(34,211,238)" fill-opacity="0.235"/><rect x="297.41" y="180.00" width="6.85" height="5.80" fill="rgb(34,211,238)" fill-opacity="0.163"/><rect x="305.14" y="180.00" width="6.85" height="5.80" fill="rgb(34,211,238)" fill-opacity="0.163"/><rect x="312.87" y="173.90" width="6.85" height="11.90" fill="rgb(34,211,238)" fill-opacity="0.183"/><rect x="320.60" y="183.30" width="6.85" height="2.50" fill="rgb(34,211,238)" fill-opacity="0.152"/><rect x="343.79" y="180.00" width="6.85" height="5.80" fill="rgb(34,211,238)" fill-opacity="0.163"/><rect x="351.52" y="180.00" width="6.85" height="5.80" fill="rgb(34,211,238)" fill-opacity="0.163"/><rect x="366.98" y="183.30" width="6.85" height="2.50" fill="rgb(34,211,238)" fill-opacity="0.152"/><rect x="374.71" y="180.00" width="6.85" height="5.80" fill="rgb(34,211,238)" fill-opacity="0.163"/><rect x="382.44" y="180.00" width="6.85" height="5.80" fill="rgb(34,211,238)" fill-opacity="0.163"/><rect x="428.82" y="183.30" width="6.85" height="2.50" fill="rgb(34,211,238)" fill-opacity="0.152"/><line x1="42.10" y1="36" x2="42.10" y2="185.8" stroke="#8e72dc" stroke-width="1.3" stroke-dasharray="4 4"/><line x1="283.90" y1="36" x2="283.90" y2="185.8" stroke="#8e72dc" stroke-width="1.3" stroke-dasharray="4 4"/><line x1="155.90" y1="42" x2="155.90" y2="180.5" stroke="#34d399" stroke-width="2.2"/><line x1="204.00" y1="42" x2="204.00" y2="180.5" stroke="#f87171" stroke-width="2" stroke-dasharray="3 5"/><circle cx="55.48" cy="113.63" r="6.5" fill="url(#halocyan)"/><circle cx="55.48" cy="113.63" r="1.8" fill="#e6f7fb" fill-opacity="0.72"/><circle cx="55.48" cy="133.02" r="6.5" fill="url(#halocyan)"/><circle cx="55.48" cy="133.02" r="1.8" fill="#e6f7fb" fill-opacity="0.72"/><circle cx="100.41" cy="101.60" r="5" fill="url(#halocyan)" opacity="0.55"/><circle cx="100.41" cy="101.60" r="1.6" fill="#d8eef4" fill-opacity="0.35"/><circle cx="102.86" cy="111.18" r="5" fill="url(#halocyan)" opacity="0.55"/><circle cx="102.86" cy="111.18" r="1.6" fill="#d8eef4" fill-opacity="0.35"/><circle cx="100.41" cy="113.02" r="5" fill="url(#halocyan)" opacity="0.55"/><circle cx="100.41" cy="113.02" r="1.6" fill="#d8eef4" fill-opacity="0.35"/><circle cx="63.58" cy="92.52" r="6.5" fill="url(#halocyan)"/><circle cx="63.58" cy="92.52" r="1.8" fill="#e6f7fb" fill-opacity="0.72"/><circle cx="74.63" cy="104.43" r="6.5" fill="url(#halocyan)"/><circle cx="74.63" cy="104.43" r="1.8" fill="#e6f7fb" fill-opacity="0.72"/><circle cx="74.63" cy="134.50" r="5" fill="url(#halocyan)" opacity="0.55"/><circle cx="74.63" cy="134.50" r="1.6" fill="#d8eef4" fill-opacity="0.35"/><circle cx="61.99" cy="140.39" r="5" fill="url(#halocyan)" opacity="0.55"/><circle cx="61.99" cy="140.39" r="1.6" fill="#d8eef4" fill-opacity="0.35"/><circle cx="121.52" cy="103.20" r="5" fill="url(#halocyan)" opacity="0.55"/><circle cx="121.52" cy="103.20" r="1.6" fill="#d8eef4" fill-opacity="0.35"/><circle cx="140.91" cy="109.33" r="6.5" fill="url(#halocyan)"/><circle cx="140.91" cy="109.33" r="1.8" fill="#e6f7fb" fill-opacity="0.72"/><circle cx="149.50" cy="128.36" r="6.5" fill="url(#halocyan)"/><circle cx="149.50" cy="128.36" r="1.8" fill="#e6f7fb" fill-opacity="0.72"/><circle cx="189.64" cy="90.06" r="5" fill="url(#halocyan)" opacity="0.55"/><circle cx="189.64" cy="90.06" r="1.6" fill="#d8eef4" fill-opacity="0.35"/><circle cx="185.96" cy="118.54" r="5" fill="url(#halocyan)" opacity="0.55"/><circle cx="185.96" cy="118.54" r="1.6" fill="#d8eef4" fill-opacity="0.35"/><circle cx="198.60" cy="121.61" r="5" fill="url(#halocyan)" opacity="0.55"/><circle cx="198.60" cy="121.61" r="1.6" fill="#d8eef4" fill-opacity="0.35"/><circle cx="207.44" cy="113.88" r="6.5" fill="url(#halocyan)"/><circle cx="207.44" cy="113.88" r="1.8" fill="#e6f7fb" fill-opacity="0.72"/><circle cx="207.44" cy="134.74" r="6.5" fill="url(#halocyan)"/><circle cx="207.44" cy="134.74" r="1.8" fill="#e6f7fb" fill-opacity="0.72"/><circle cx="239.97" cy="100.74" r="5" fill="url(#halocyan)" opacity="0.55"/><circle cx="239.97" cy="100.74" r="1.6" fill="#d8eef4" fill-opacity="0.35"/><circle cx="284.15" cy="121.61" r="5" fill="url(#halocyan)" opacity="0.55"/><circle cx="284.15" cy="121.61" r="1.6" fill="#d8eef4" fill-opacity="0.35"/></svg>
<div class="t" style="left:366.00px;top:491.65px;font-size:12.7px;color:#f87171">Current</div>
<div class="t" style="left:317.90px;top:491.65px;font-size:12.7px;color:#34d399">MCMC</div>
<div class="t" style="left:203.40px;top:620.03px;font-size:10px;color:rgba(229,231,235,0.45)">1.42</div>
<div class="t" style="left:404.90px;top:620.03px;font-size:10px;color:rgba(229,231,235,0.45)">6.77</div>
<div class="a" style="left:169px;top:639.2px;width:540.5px;height:14px;display:flex;justify-content:space-between;font-size:11.5px;line-height:14px;white-space:nowrap"><span style="color:#f87171">Now: <b style="color:#fca5a5">5</b></span><b style="color:#34d399;font-size:12.4px">3.934±1.443</b><span style="color:#a855f7;font-size:11px">[1.42,6.767]</span></div>
<div class="card" style="left:736px;top:447.2px"></div>
<div class="t" style="left:747.00px;top:462.29px;font-size:13.6px;color:#22d3ee"><b>Strong Affirmation</b></div>
<svg class="a" style="left:1072.5px;top:460.8px;" width="15" height="15" viewBox="0 0 15 15"><rect x="0" y="0" width="15" height="15" rx="2.10" fill="#3fc26f"/><path d="M3.30 7.80 L6.30 10.80 L12.00 4.50" fill="none" stroke="#fff" stroke-width="1.95" stroke-linecap="round" stroke-linejoin="round"/></svg>
<div class="t mono" style="left:1098.00px;top:462.20px;font-size:13.7px;color:#34d399">Converged — 600 samples</div>
<svg class="a" style="left:736px;top:447.2px;" width="563" height="218" viewBox="0 0 563 218"><defs><radialGradient id="halocyan"><stop offset="0" stop-color="rgb(34,211,238)" stop-opacity="0.45"/><stop offset="1" stop-color="rgb(34,211,238)" stop-opacity="0"/></radialGradient></defs><rect x="34.10" y="36" width="229.20" height="149.80" fill="#4a4b62" fill-opacity="0.85"/><rect x="11.40" y="181.50" width="6.85" height="4.30" fill="rgb(34,211,238)" fill-opacity="0.158"/><rect x="19.13" y="178.40" width="6.85" height="7.40" fill="rgb(34,211,238)" fill-opacity="0.168"/><rect x="26.86" y="176.00" width="6.85" height="9.80" fill="rgb(34,211,238)" fill-opacity="0.176"/><rect x="34.59" y="168.00" width="6.85" height="17.80" fill="rgb(34,211,238)" fill-opacity="0.281"/><rect x="42.32" y="139.20" width="6.85" height="46.60" fill="rgb(34,211,238)" fill-opacity="0.412"/><rect x="50.05" y="157.20" width="6.85" height="28.60" fill="rgb(34,211,238)" fill-opacity="0.330"/><rect x="57.78" y="116.10" width="6.85" height="69.70" fill="rgb(34,211,238)" fill-opacity="0.518"/><rect x="65.51" y="136.70" width="6.85" height="49.10" fill="rgb(34,211,238)" fill-opacity="0.424"/><rect x="73.24" y="118.30" width="6.85" height="67.50" fill="rgb(34,211,238)" fill-opacity="0.508"/><rect x="80.97" y="105.20" width="6.85" height="80.60" fill="rgb(34,211,238)" fill-opacity="0.567"/><rect x="88.70" y="136.70" width="6.85" height="49.10" fill="rgb(34,211,238)" fill-opacity="0.424"/><rect x="96.43" y="76.90" width="6.85" height="108.90" fill="rgb(34,211,238)" fill-opacity="0.696"/><rect x="104.16" y="105.20" width="6.85" height="80.60" fill="rgb(34,211,238)" fill-opacity="0.567"/><rect x="111.89" y="58.80" width="6.85" height="127.00" fill="rgb(34,211,238)" fill-opacity="0.779"/><rect x="119.62" y="82.30" width="6.85" height="103.50" fill="rgb(34,211,238)" fill-opacity="0.672"/><rect x="127.35" y="123.80" width="6.85" height="62.00" fill="rgb(34,211,238)" fill-opacity="0.482"/><rect x="135.08" y="139.20" width="6.85" height="46.60" fill="rgb(34,211,238)" fill-opacity="0.412"/><rect x="142.81" y="123.80" width="6.85" height="62.00" fill="rgb(34,211,238)" fill-opacity="0.482"/><rect x="150.54" y="84.50" width="6.85" height="101.30" fill="rgb(34,211,238)" fill-opacity="0.662"/><rect x="158.27" y="144.40" width="6.85" height="41.40" fill="rgb(34,211,238)" fill-opacity="0.389"/><rect x="166.00" y="103.20" width="6.85" height="82.60" fill="rgb(34,211,238)" fill-opacity="0.576"/><rect x="173.73" y="144.40" width="6.85" height="41.40" fill="rgb(34,211,238)" fill-opacity="0.389"/><rect x="181.46" y="144.40" width="6.85" height="41.40" fill="rgb(34,211,238)" fill-opacity="0.389"/><rect x="189.19" y="157.20" width="6.85" height="28.60" fill="rgb(34,211,238)" fill-opacity="0.330"/><rect x="196.92" y="152.00" width="6.85" height="33.80" fill="rgb(34,211,238)" fill-opacity="0.354"/><rect x="204.65" y="160.00" width="6.85" height="25.80" fill="rgb(34,211,238)" fill-opacity="0.318"/><rect x="212.38" y="176.00" width="6.85" height="9.80" fill="rgb(34,211,238)" fill-opacity="0.245"/><rect x="220.11" y="165.30" width="6.85" height="20.50" fill="rgb(34,211,238)" fill-opacity="0.293"/><rect x="227.84" y="176.00" width="6.85" height="9.80" fill="rgb(34,211,238)" fill-opacity="0.245"/><rect x="235.57" y="165.30" width="6.85" height="20.50" fill="rgb(34,211,238)" fill-opacity="0.293"/><rect x="243.30" y="172.90" width="6.85" height="12.90" fill="rgb(34,211,238)" fill-opacity="0.259"/><rect x="251.03" y="178.40" width="6.85" height="7.40" fill="rgb(34,211,238)" fill-opacity="0.234"/><rect x="258.76" y="170.20" width="6.85" height="15.60" fill="rgb(34,211,238)" fill-opacity="0.271"/><rect x="266.49" y="180.90" width="6.85" height="4.90" fill="rgb(34,211,238)" fill-opacity="0.160"/><rect x="274.22" y="178.40" width="6.85" height="7.40" fill="rgb(34,211,238)" fill-opacity="0.168"/><rect x="281.95" y="180.90" width="6.85" height="4.90" fill="rgb(34,211,238)" fill-opacity="0.160"/><rect x="289.68" y="178.40" width="6.85" height="7.40" fill="rgb(34,211,238)" fill-opacity="0.168"/><rect x="320.60" y="183.30" width="6.85" height="2.50" fill="rgb(34,211,238)" fill-opacity="0.152"/><rect x="336.06" y="183.30" width="6.85" height="2.50" fill="rgb(34,211,238)" fill-opacity="0.152"/><rect x="343.79" y="183.30" width="6.85" height="2.50" fill="rgb(34,211,238)" fill-opacity="0.152"/><rect x="428.82" y="183.30" width="6.85" height="2.50" fill="rgb(34,211,238)" fill-opacity="0.152"/><line x1="34.10" y1="36" x2="34.10" y2="185.8" stroke="#8e72dc" stroke-width="1.3" stroke-dasharray="4 4"/><line x1="263.30" y1="36" x2="263.30" y2="185.8" stroke="#8e72dc" stroke-width="1.3" stroke-dasharray="4 4"/><line x1="133.50" y1="42" x2="133.50" y2="180.5" stroke="#34d399" stroke-width="2.2"/><line x1="43.00" y1="42" x2="43.00" y2="180.5" stroke="#f87171" stroke-width="2" stroke-dasharray="3 5"/><circle cx="13.50" cy="99.88" r="5" fill="url(#halocyan)" opacity="0.55"/><circle cx="13.50" cy="99.88" r="1.6" fill="#d8eef4" fill-opacity="0.35"/><circle cx="19.39" cy="127.38" r="6.5" fill="url(#halocyan)"/><circle cx="19.39" cy="127.38" r="1.8" fill="#e6f7fb" fill-opacity="0.72"/><circle cx="42.96" cy="122.47" r="6.5" fill="url(#halocyan)"/><circle cx="42.96" cy="122.47" r="1.8" fill="#e6f7fb" fill-opacity="0.72"/><circle cx="42.96" cy="127.13" r="5" fill="url(#halocyan)" opacity="0.55"/><circle cx="42.96" cy="127.13" r="1.6" fill="#d8eef4" fill-opacity="0.35"/><circle cx="64.44" cy="99.15" r="5" fill="url(#halocyan)" opacity="0.55"/><circle cx="64.44" cy="99.15" r="1.6" fill="#d8eef4" fill-opacity="0.35"/><circle cx="74.14" cy="105.65" r="5" fill="url(#halocyan)" opacity="0.55"/><circle cx="74.14" cy="105.65" r="1.6" fill="#d8eef4" fill-opacity="0.35"/><circle cx="83.22" cy="96.69" r="6.5" fill="url(#halocyan)"/><circle cx="83.22" cy="96.69" r="1.8" fill="#e6f7fb" fill-opacity="0.72"/><circle cx="91.08" cy="81.23" r="6.5" fill="url(#halocyan)"/><circle cx="91.08" cy="81.23" r="1.8" fill="#e6f7fb" fill-opacity="0.72"/><circle cx="109.00" cy="84.42" r="5" fill="url(#halocyan)" opacity="0.55"/><circle cx="109.00" cy="84.42" r="1.6" fill="#d8eef4" fill-opacity="0.35"/><circle cx="111.94" cy="94.24" r="5" fill="url(#halocyan)" opacity="0.55"/><circle cx="111.94" cy="94.24" r="1.6" fill="#d8eef4" fill-opacity="0.35"/><circle cx="120.90" cy="97.92" r="5" fill="url(#halocyan)" opacity="0.55"/><circle cx="120.90" cy="97.92" r="1.6" fill="#d8eef4" fill-opacity="0.35"/><circle cx="108.63" cy="125.66" r="6.5" fill="url(#halocyan)"/><circle cx="108.63" cy="125.66" r="1.8" fill="#e6f7fb" fill-opacity="0.72"/><circle cx="81.63" cy="134.74" r="6.5" fill="url(#halocyan)"/><circle cx="81.63" cy="134.74" r="1.8" fill="#e6f7fb" fill-opacity="0.72"/><circle cx="109.24" cy="136.71" r="5" fill="url(#halocyan)" opacity="0.55"/><circle cx="109.24" cy="136.71" r="1.6" fill="#d8eef4" fill-opacity="0.35"/><circle cx="120.90" cy="136.95" r="5" fill="url(#halocyan)" opacity="0.55"/><circle cx="120.90" cy="136.95" r="1.6" fill="#d8eef4" fill-opacity="0.35"/><circle cx="131.58" cy="140.39" r="5" fill="url(#halocyan)" opacity="0.55"/><circle cx="131.58" cy="140.39" r="1.6" fill="#d8eef4" fill-opacity="0.35"/><circle cx="277.65" cy="119.03" r="6.5" fill="url(#halocyan)"/><circle cx="277.65" cy="119.03" r="1.8" fill="#e6f7fb" fill-opacity="0.72"/></svg>
<div class="t" style="left:783.00px;top:491.65px;font-size:12.7px;color:#f87171">Current</div>
<div class="t" style="left:873.50px;top:491.65px;font-size:12.7px;color:#34d399">MCMC</div>
<div class="t" style="left:773.40px;top:620.03px;font-size:10px;color:rgba(229,231,235,0.45)">0.84</div>
<div class="t" style="left:962.30px;top:620.03px;font-size:10px;color:rgba(229,231,235,0.45)">4.94</div>
<div class="a" style="left:747px;top:639.2px;width:540.5px;height:14px;display:flex;justify-content:space-between;font-size:11.5px;line-height:14px;white-space:nowrap"><span style="color:#f87171">Now: <b style="color:#fca5a5">1</b></span><b style="color:#34d399;font-size:12.4px">2.618±1.17</b><span style="color:#a855f7;font-size:11px">[0.842,4.939]</span></div>
<div class="card" style="left:1314px;top:447.2px"></div>
<div class="t" style="left:1325.00px;top:462.29px;font-size:13.6px;color:#22d3ee"><b>Weak Affirmation</b></div>
<svg class="a" style="left:1650.5px;top:460.8px;" width="15" height="15" viewBox="0 0 15 15"><rect x="0" y="0" width="15" height="15" rx="2.10" fill="#3fc26f"/><path d="M3.30 7.80 L6.30 10.80 L12.00 4.50" fill="none" stroke="#fff" stroke-width="1.95" stroke-linecap="round" stroke-linejoin="round"/></svg>
<div class="t mono" style="left:1676.00px;top:462.20px;font-size:13.7px;color:#34d399">Converged — 600 samples</div>
<svg class="a" style="left:1314px;top:447.2px;" width="563" height="218" viewBox="0 0 563 218"><defs><radialGradient id="halocyan"><stop offset="0" stop-color="rgb(34,211,238)" stop-opacity="0.45"/><stop offset="1" stop-color="rgb(34,211,238)" stop-opacity="0"/></radialGradient></defs><rect x="26.00" y="36" width="297.30" height="149.80" fill="#4a4b62" fill-opacity="0.85"/><rect x="11.40" y="179.30" width="6.85" height="6.50" fill="rgb(34,211,238)" fill-opacity="0.165"/><rect x="19.13" y="162.10" width="6.85" height="23.70" fill="rgb(34,211,238)" fill-opacity="0.222"/><rect x="26.86" y="172.30" width="6.85" height="13.50" fill="rgb(34,211,238)" fill-opacity="0.262"/><rect x="34.59" y="155.10" width="6.85" height="30.70" fill="rgb(34,211,238)" fill-opacity="0.340"/><rect x="42.32" y="165.50" width="6.85" height="20.30" fill="rgb(34,211,238)" fill-opacity="0.292"/><rect x="50.05" y="144.70" width="6.85" height="41.10" fill="rgb(34,211,238)" fill-opacity="0.387"/><rect x="57.78" y="127.50" width="6.85" height="58.30" fill="rgb(34,211,238)" fill-opacity="0.466"/><rect x="65.51" y="110.30" width="6.85" height="75.50" fill="rgb(34,211,238)" fill-opacity="0.544"/><rect x="73.24" y="107.00" width="6.85" height="78.80" fill="rgb(34,211,238)" fill-opacity="0.559"/><rect x="80.97" y="75.90" width="6.85" height="109.90" fill="rgb(34,211,238)" fill-opacity="0.701"/><rect x="88.70" y="62.20" width="6.85" height="123.60" fill="rgb(34,211,238)" fill-opacity="0.763"/><rect x="96.43" y="58.50" width="6.85" height="127.30" fill="rgb(34,211,238)" fill-opacity="0.780"/><rect x="104.16" y="110.30" width="6.85" height="75.50" fill="rgb(34,211,238)" fill-opacity="0.544"/><rect x="111.89" y="127.50" width="6.85" height="58.30" fill="rgb(34,211,238)" fill-opacity="0.466"/><rect x="119.62" y="120.80" width="6.85" height="65.00" fill="rgb(34,211,238)" fill-opacity="0.496"/><rect x="127.35" y="96.40" width="6.85" height="89.40" fill="rgb(34,211,238)" fill-opacity="0.607"/><rect x="135.08" y="86.40" width="6.85" height="99.40" fill="rgb(34,211,238)" fill-opacity="0.653"/><rect x="142.81" y="110.30" width="6.85" height="75.50" fill="rgb(34,211,238)" fill-opacity="0.544"/><rect x="150.54" y="114.00" width="6.85" height="71.80" fill="rgb(34,211,238)" fill-opacity="0.527"/><rect x="158.27" y="134.20" width="6.85" height="51.60" fill="rgb(34,211,238)" fill-opacity="0.435"/><rect x="166.00" y="137.90" width="6.85" height="47.90" fill="rgb(34,211,238)" fill-opacity="0.418"/><rect x="173.73" y="158.40" width="6.85" height="27.40" fill="rgb(34,211,238)" fill-opacity="0.325"/><rect x="181.46" y="144.70" width="6.85" height="41.10" fill="rgb(34,211,238)" fill-opacity="0.387"/><rect x="189.19" y="107.00" width="6.85" height="78.80" fill="rgb(34,211,238)" fill-opacity="0.559"/><rect x="196.92" y="155.10" width="6.85" height="30.70" fill="rgb(34,211,238)" fill-opacity="0.340"/><rect x="204.65" y="114.00" width="6.85" height="71.80" fill="rgb(34,211,238)" fill-opacity="0.527"/><rect x="212.38" y="158.40" width="6.85" height="27.40" fill="rgb(34,211,238)" fill-opacity="0.325"/><rect x="220.11" y="155.10" width="6.85" height="30.70" fill="rgb(34,211,238)" fill-opacity="0.340"/><rect x="227.84" y="155.10" width="6.85" height="30.70" fill="rgb(34,211,238)" fill-opacity="0.340"/><rect x="235.57" y="158.40" width="6.85" height="27.40" fill="rgb(34,211,238)" fill-opacity="0.325"/><rect x="243.30" y="176.00" width="6.85" height="9.80" fill="rgb(34,211,238)" fill-opacity="0.245"/><rect x="251.03" y="162.10" width="6.85" height="23.70" fill="rgb(34,211,238)" fill-opacity="0.308"/><rect x="258.76" y="158.40" width="6.85" height="27.40" fill="rgb(34,211,238)" fill-opacity="0.325"/><rect x="266.49" y="144.70" width="6.85" height="41.10" fill="rgb(34,211,238)" fill-opacity="0.387"/><rect x="274.22" y="172.30" width="6.85" height="13.50" fill="rgb(34,211,238)" fill-opacity="0.262"/><rect x="281.95" y="172.30" width="6.85" height="13.50" fill="rgb(34,211,238)" fill-opacity="0.262"/><rect x="289.68" y="151.40" width="6.85" height="34.40" fill="rgb(34,211,238)" fill-opacity="0.357"/><rect x="297.41" y="162.10" width="6.85" height="23.70" fill="rgb(34,211,238)" fill-opacity="0.308"/><rect x="305.14" y="176.00" width="6.85" height="9.80" fill="rgb(34,211,238)" fill-opacity="0.245"/><rect x="312.87" y="169.00" width="6.85" height="16.80" fill="rgb(34,211,238)" fill-opacity="0.277"/><rect x="320.60" y="179.30" width="6.85" height="6.50" fill="rgb(34,211,238)" fill-opacity="0.165"/><rect x="328.33" y="165.50" width="6.85" height="20.30" fill="rgb(34,211,238)" fill-opacity="0.211"/><rect x="336.06" y="169.00" width="6.85" height="16.80" fill="rgb(34,211,238)" fill-opacity="0.199"/><rect x="343.79" y="176.00" width="6.85" height="9.80" fill="rgb(34,211,238)" fill-opacity="0.176"/><rect x="351.52" y="165.50" width="6.85" height="20.30" fill="rgb(34,211,238)" fill-opacity="0.211"/><rect x="359.25" y="176.00" width="6.85" height="9.80" fill="rgb(34,211,238)" fill-opacity="0.176"/><rect x="366.98" y="176.00" width="6.85" height="9.80" fill="rgb(34,211,238)" fill-opacity="0.176"/><rect x="374.71" y="182.70" width="6.85" height="3.10" fill="rgb(34,211,238)" fill-opacity="0.154"/><rect x="382.44" y="182.70" width="6.85" height="3.10" fill="rgb(34,211,238)" fill-opacity="0.154"/><rect x="390.17" y="182.70" width="6.85" height="3.10" fill="rgb(34,211,238)" fill-opacity="0.154"/><rect x="397.90" y="182.70" width="6.85" height="3.10" fill="rgb(34,211,238)" fill-opacity="0.154"/><rect x="405.63" y="179.30" width="6.85" height="6.50" fill="rgb(34,211,238)" fill-opacity="0.165"/><rect x="413.36" y="182.70" width="6.85" height="3.10" fill="rgb(34,211,238)" fill-opacity="0.154"/><rect x="421.09" y="179.30" width="6.85" height="6.50" fill="rgb(34,211,238)" fill-opacity="0.165"/><rect x="428.82" y="182.70" width="6.85" height="3.10" fill="rgb(34,211,238)" fill-opacity="0.154"/><line x1="26.00" y1="36" x2="26.00" y2="185.8" stroke="#8e72dc" stroke-width="1.3" stroke-dasharray="4 4"/><line x1="323.30" y1="36" x2="323.30" y2="185.8" stroke="#8e72dc" stroke-width="1.3" stroke-dasharray="4 4"/><line x1="156.50" y1="42" x2="156.50" y2="180.5" stroke="#34d399" stroke-width="2.2"/><line x1="169.40" y1="42" x2="169.40" y2="180.5" stroke="#f87171" stroke-width="2" stroke-dasharray="3 5"/><circle cx="42.35" cy="89.70" r="5" fill="url(#halocyan)" opacity="0.55"/><circle cx="42.35" cy="89.70" r="1.6" fill="#d8eef4" fill-opacity="0.35"/><circle cx="42.35" cy="111.18" r="5" fill="url(#halocyan)" opacity="0.55"/><circle cx="42.35" cy="111.18" r="1.6" fill="#d8eef4" fill-opacity="0.35"/><circle cx="27.25" cy="118.30" r="6.5" fill="url(#halocyan)"/><circle cx="27.25" cy="118.30" r="1.8" fill="#e6f7fb" fill-opacity="0.72"/><circle cx="24.30" cy="126.89" r="6.5" fill="url(#halocyan)"/><circle cx="24.30" cy="126.89" r="1.8" fill="#e6f7fb" fill-opacity="0.72"/><circle cx="27.62" cy="136.71" r="5" fill="url(#halocyan)" opacity="0.55"/><circle cx="27.62" cy="136.71" r="1.6" fill="#d8eef4" fill-opacity="0.35"/><circle cx="108.02" cy="99.52" r="5" fill="url(#halocyan)" opacity="0.55"/><circle cx="108.02" cy="99.52" r="1.6" fill="#d8eef4" fill-opacity="0.35"/><circle cx="100.65" cy="117.93" r="5" fill="url(#halocyan)" opacity="0.55"/><circle cx="100.65" cy="117.93" r="1.6" fill="#d8eef4" fill-opacity="0.35"/><circle cx="95.74" cy="128.11" r="6.5" fill="url(#halocyan)"/><circle cx="95.74" cy="128.11" r="1.8" fill="#e6f7fb" fill-opacity="0.72"/><circle cx="129.86" cy="124.06" r="6.5" fill="url(#halocyan)"/><circle cx="129.86" cy="124.06" r="1.8" fill="#e6f7fb" fill-opacity="0.72"/><circle cx="206.82" cy="106.88" r="5" fill="url(#halocyan)" opacity="0.55"/><circle cx="206.82" cy="106.88" r="1.6" fill="#d8eef4" fill-opacity="0.35"/><circle cx="238.37" cy="81.96" r="5" fill="url(#halocyan)" opacity="0.55"/><circle cx="238.37" cy="81.96" r="1.6" fill="#d8eef4" fill-opacity="0.35"/><circle cx="238.74" cy="122.84" r="5" fill="url(#halocyan)" opacity="0.55"/><circle cx="238.74" cy="122.84" r="1.6" fill="#d8eef4" fill-opacity="0.35"/><circle cx="266.11" cy="103.20" r="6.5" fill="url(#halocyan)"/><circle cx="266.11" cy="103.20" r="1.8" fill="#e6f7fb" fill-opacity="0.72"/><circle cx="268.20" cy="113.88" r="6.5" fill="url(#halocyan)"/><circle cx="268.20" cy="113.88" r="1.8" fill="#e6f7fb" fill-opacity="0.72"/><circle cx="301.71" cy="138.18" r="5" fill="url(#halocyan)" opacity="0.55"/><circle cx="301.71" cy="138.18" r="1.6" fill="#d8eef4" fill-opacity="0.35"/><circle cx="327.73" cy="121.00" r="5" fill="url(#halocyan)" opacity="0.55"/><circle cx="327.73" cy="121.00" r="1.6" fill="#d8eef4" fill-opacity="0.35"/><circle cx="413.65" cy="111.18" r="5" fill="url(#halocyan)" opacity="0.55"/><circle cx="413.65" cy="111.18" r="1.6" fill="#d8eef4" fill-opacity="0.35"/></svg>
<div class="t" style="left:1487.40px;top:491.65px;font-size:12.7px;color:#f87171">Current</div>
<div class="t" style="left:1474.50px;top:491.65px;font-size:12.7px;color:#34d399">MCMC</div>
<div class="t" style="left:1343.30px;top:620.03px;font-size:10px;color:rgba(229,231,235,0.45)">0.10</div>
<div class="t" style="left:1600.30px;top:620.03px;font-size:10px;color:rgba(229,231,235,0.45)">0.72</div>
<div class="a" style="left:1325px;top:639.2px;width:540.5px;height:14px;display:flex;justify-content:space-between;font-size:11.5px;line-height:14px;white-space:nowrap"><span style="color:#f87171">Now: <b style="color:#fca5a5">0.4</b></span><b style="color:#34d399;font-size:12.4px">0.374±0.174</b><span style="color:#a855f7;font-size:11px">[0.102,0.72]</span></div>
<div class="card" style="left:1893px;top:447.2px"></div>
<div class="t" style="left:1904.00px;top:462.29px;font-size:13.6px;color:#22d3ee"><b>Weak Negation</b></div>
<svg class="a" style="left:2229.5px;top:460.8px;" width="15" height="15" viewBox="0 0 15 15"><rect x="0" y="0" width="15" height="15" rx="2.10" fill="#3fc26f"/><path d="M3.30 7.80 L6.30 10.80 L12.00 4.50" fill="none" stroke="#fff" stroke-width="1.95" stroke-linecap="round" stroke-linejoin="round"/></svg>
<div class="t mono" style="left:2255.00px;top:462.20px;font-size:13.7px;color:#34d399">Converged — 600 samples</div>
<svg class="a" style="left:1893px;top:447.2px;" width="563" height="218" viewBox="0 0 563 218"><defs><radialGradient id="halocyan"><stop offset="0" stop-color="rgb(34,211,238)" stop-opacity="0.45"/><stop offset="1" stop-color="rgb(34,211,238)" stop-opacity="0"/></radialGradient></defs><rect x="23.70" y="36" width="249.80" height="149.80" fill="#4a4b62" fill-opacity="0.85"/><rect x="11.40" y="180.30" width="6.85" height="5.50" fill="rgb(34,211,238)" fill-opacity="0.162"/><rect x="19.13" y="180.30" width="6.85" height="5.50" fill="rgb(34,211,238)" fill-opacity="0.162"/><rect x="26.86" y="168.00" width="6.85" height="17.80" fill="rgb(34,211,238)" fill-opacity="0.281"/><rect x="34.59" y="149.80" width="6.85" height="36.00" fill="rgb(34,211,238)" fill-opacity="0.364"/><rect x="42.32" y="119.30" width="6.85" height="66.50" fill="rgb(34,211,238)" fill-opacity="0.503"/><rect x="50.05" y="95.20" width="6.85" height="90.60" fill="rgb(34,211,238)" fill-opacity="0.613"/><rect x="57.78" y="76.90" width="6.85" height="108.90" fill="rgb(34,211,238)" fill-opacity="0.696"/><rect x="65.51" y="79.80" width="6.85" height="106.00" fill="rgb(34,211,238)" fill-opacity="0.683"/><rect x="73.24" y="61.80" width="6.85" height="124.00" fill="rgb(34,211,238)" fill-opacity="0.765"/><rect x="80.97" y="58.80" width="6.85" height="127.00" fill="rgb(34,211,238)" fill-opacity="0.779"/><rect x="88.70" y="71.00" width="6.85" height="114.80" fill="rgb(34,211,238)" fill-opacity="0.723"/><rect x="96.43" y="119.30" width="6.85" height="66.50" fill="rgb(34,211,238)" fill-opacity="0.503"/><rect x="104.16" y="104.20" width="6.85" height="81.60" fill="rgb(34,211,238)" fill-opacity="0.572"/><rect x="111.89" y="76.90" width="6.85" height="108.90" fill="rgb(34,211,238)" fill-opacity="0.696"/><rect x="119.62" y="110.30" width="6.85" height="75.50" fill="rgb(34,211,238)" fill-opacity="0.544"/><rect x="127.35" y="110.30" width="6.85" height="75.50" fill="rgb(34,211,238)" fill-opacity="0.544"/><rect x="135.08" y="143.70" width="6.85" height="42.10" fill="rgb(34,211,238)" fill-opacity="0.392"/><rect x="142.81" y="134.60" width="6.85" height="51.20" fill="rgb(34,211,238)" fill-opacity="0.433"/><rect x="150.54" y="149.80" width="6.85" height="36.00" fill="rgb(34,211,238)" fill-opacity="0.364"/><rect x="158.27" y="131.40" width="6.85" height="54.40" fill="rgb(34,211,238)" fill-opacity="0.448"/><rect x="166.00" y="128.50" width="6.85" height="57.30" fill="rgb(34,211,238)" fill-opacity="0.461"/><rect x="173.73" y="143.70" width="6.85" height="42.10" fill="rgb(34,211,238)" fill-opacity="0.392"/><rect x="181.46" y="140.80" width="6.85" height="45.00" fill="rgb(34,211,238)" fill-opacity="0.405"/><rect x="189.19" y="177.20" width="6.85" height="8.60" fill="rgb(34,211,238)" fill-opacity="0.239"/><rect x="196.92" y="174.10" width="6.85" height="11.70" fill="rgb(34,211,238)" fill-opacity="0.253"/><rect x="204.65" y="153.00" width="6.85" height="32.80" fill="rgb(34,211,238)" fill-opacity="0.349"/><rect x="212.38" y="153.00" width="6.85" height="32.80" fill="rgb(34,211,238)" fill-opacity="0.349"/><rect x="220.11" y="162.10" width="6.85" height="23.70" fill="rgb(34,211,238)" fill-opacity="0.308"/><rect x="227.84" y="162.10" width="6.85" height="23.70" fill="rgb(34,211,238)" fill-opacity="0.308"/><rect x="235.57" y="162.10" width="6.85" height="23.70" fill="rgb(34,211,238)" fill-opacity="0.308"/><rect x="243.30" y="162.10" width="6.85" height="23.70" fill="rgb(34,211,238)" fill-opacity="0.308"/><rect x="251.03" y="174.10" width="6.85" height="11.70" fill="rgb(34,211,238)" fill-opacity="0.253"/><rect x="258.76" y="171.10" width="6.85" height="14.70" fill="rgb(34,211,238)" fill-opacity="0.267"/><rect x="266.49" y="183.30" width="6.85" height="2.50" fill="rgb(34,211,238)" fill-opacity="0.211"/><rect x="274.22" y="162.10" width="6.85" height="23.70" fill="rgb(34,211,238)" fill-opacity="0.222"/><rect x="281.95" y="177.20" width="6.85" height="8.60" fill="rgb(34,211,238)" fill-opacity="0.172"/><rect x="297.41" y="177.20" width="6.85" height="8.60" fill="rgb(34,211,238)" fill-opacity="0.172"/><rect x="305.14" y="183.30" width="6.85" height="2.50" fill="rgb(34,211,238)" fill-opacity="0.152"/><rect x="328.33" y="183.30" width="6.85" height="2.50" fill="rgb(34,211,238)" fill-opacity="0.152"/><rect x="336.06" y="180.30" width="6.85" height="5.50" fill="rgb(34,211,238)" fill-opacity="0.162"/><rect x="428.82" y="183.30" width="6.85" height="2.50" fill="rgb(34,211,238)" fill-opacity="0.152"/><line x1="23.70" y1="36" x2="23.70" y2="185.8" stroke="#8e72dc" stroke-width="1.3" stroke-dasharray="4 4"/><line x1="273.50" y1="36" x2="273.50" y2="185.8" stroke="#8e72dc" stroke-width="1.3" stroke-dasharray="4 4"/><line x1="126.20" y1="42" x2="126.20" y2="180.5" stroke="#34d399" stroke-width="2.2"/><line x1="100.00" y1="42" x2="100.00" y2="180.5" stroke="#f87171" stroke-width="2" stroke-dasharray="3 5"/><circle cx="50.33" cy="86.01" r="5" fill="url(#halocyan)" opacity="0.55"/><circle cx="50.33" cy="86.01" r="1.6" fill="#d8eef4" fill-opacity="0.35"/><circle cx="50.33" cy="91.78" r="5" fill="url(#halocyan)" opacity="0.55"/><circle cx="50.33" cy="91.78" r="1.6" fill="#d8eef4" fill-opacity="0.35"/><circle cx="55.24" cy="100.37" r="5" fill="url(#halocyan)" opacity="0.55"/><circle cx="55.24" cy="100.37" r="1.6" fill="#d8eef4" fill-opacity="0.35"/><circle cx="63.83" cy="103.81" r="6.5" fill="url(#halocyan)"/><circle cx="63.83" cy="103.81" r="1.8" fill="#e6f7fb" fill-opacity="0.72"/><circle cx="62.35" cy="90.92" r="6.5" fill="url(#halocyan)"/><circle cx="62.35" cy="90.92" r="1.8" fill="#e6f7fb" fill-opacity="0.72"/><circle cx="78.56" cy="91.29" r="5" fill="url(#halocyan)" opacity="0.55"/><circle cx="78.56" cy="91.29" r="1.6" fill="#d8eef4" fill-opacity="0.35"/><circle cx="85.31" cy="96.69" r="5" fill="url(#halocyan)" opacity="0.55"/><circle cx="85.31" cy="96.69" r="1.6" fill="#d8eef4" fill-opacity="0.35"/><circle cx="66.28" cy="122.22" r="5" fill="url(#halocyan)" opacity="0.55"/><circle cx="66.28" cy="122.22" r="1.6" fill="#d8eef4" fill-opacity="0.35"/><circle cx="80.40" cy="125.29" r="6.5" fill="url(#halocyan)"/><circle cx="80.40" cy="125.29" r="1.8" fill="#e6f7fb" fill-opacity="0.72"/><circle cx="86.53" cy="123.70" r="6.5" fill="url(#halocyan)"/><circle cx="86.53" cy="123.70" r="1.8" fill="#e6f7fb" fill-opacity="0.72"/><circle cx="79.78" cy="129.83" r="5" fill="url(#halocyan)" opacity="0.55"/><circle cx="79.78" cy="129.83" r="1.6" fill="#d8eef4" fill-opacity="0.35"/><circle cx="79.17" cy="137.20" r="5" fill="url(#halocyan)" opacity="0.55"/><circle cx="79.17" cy="137.20" r="1.6" fill="#d8eef4" fill-opacity="0.35"/><circle cx="93.29" cy="138.43" r="5" fill="url(#halocyan)" opacity="0.55"/><circle cx="93.29" cy="138.43" r="1.6" fill="#d8eef4" fill-opacity="0.35"/><circle cx="104.95" cy="119.52" r="6.5" fill="url(#halocyan)"/><circle cx="104.95" cy="119.52" r="1.8" fill="#e6f7fb" fill-opacity="0.72"/><circle cx="107.77" cy="94.24" r="6.5" fill="url(#halocyan)"/><circle cx="107.77" cy="94.24" r="1.8" fill="#e6f7fb" fill-opacity="0.72"/><circle cx="145.45" cy="133.88" r="5" fill="url(#halocyan)" opacity="0.55"/><circle cx="145.45" cy="133.88" r="1.6" fill="#d8eef4" fill-opacity="0.35"/><circle cx="161.78" cy="86.38" r="5" fill="url(#halocyan)" opacity="0.55"/><circle cx="161.78" cy="86.38" r="1.6" fill="#d8eef4" fill-opacity="0.35"/><circle cx="298.27" cy="86.38" r="5" fill="url(#halocyan)" opacity="0.55"/><circle cx="298.27" cy="86.38" r="1.6" fill="#d8eef4" fill-opacity="0.35"/></svg>
<div class="t" style="left:1997.00px;top:491.65px;font-size:12.7px;color:#f87171">Current</div>
<div class="t" style="left:2023.20px;top:491.65px;font-size:12.7px;color:#34d399">MCMC</div>
<div class="t" style="left:1920.00px;top:620.03px;font-size:10px;color:rgba(229,231,235,0.45)">0.12</div>
<div class="t" style="left:2129.50px;top:620.03px;font-size:10px;color:rgba(229,231,235,0.45)">1.03</div>
<div class="a" style="left:1904px;top:639.2px;width:540.5px;height:14px;display:flex;justify-content:space-between;font-size:11.5px;line-height:14px;white-space:nowrap"><span style="color:#f87171">Now: <b style="color:#fca5a5">0.4</b></span><b style="color:#34d399;font-size:12.4px">0.495±0.264</b><span style="color:#a855f7;font-size:11px">[0.124,1.028]</span></div>
<div class="card" style="left:158px;top:681.8px"></div>
<div class="t" style="left:169.00px;top:696.89px;font-size:13.6px;color:#22d3ee"><b>Strong Negation</b></div>
<svg class="a" style="left:494.5px;top:695.4px;" width="15" height="15" viewBox="0 0 15 15"><rect x="0" y="0" width="15" height="15" rx="2.10" fill="#3fc26f"/><path d="M3.30 7.80 L6.30 10.80 L12.00 4.50" fill="none" stroke="#fff" stroke-width="1.95" stroke-linecap="round" stroke-linejoin="round"/></svg>
<div class="t mono" style="left:520.00px;top:696.80px;font-size:13.7px;color:#34d399">Converged — 600 samples</div>
<svg class="a" style="left:158px;top:681.8px;" width="563" height="218" viewBox="0 0 563 218"><defs><radialGradient id="halocyan"><stop offset="0" stop-color="rgb(34,211,238)" stop-opacity="0.45"/><stop offset="1" stop-color="rgb(34,211,238)" stop-opacity="0"/></radialGradient></defs><rect x="18.40" y="36" width="213.30" height="149.80" fill="#4a4b62" fill-opacity="0.85"/><rect x="11.40" y="181.10" width="6.85" height="4.70" fill="rgb(34,211,238)" fill-opacity="0.159"/><rect x="19.13" y="149.20" width="6.85" height="36.60" fill="rgb(34,211,238)" fill-opacity="0.367"/><rect x="26.86" y="149.20" width="6.85" height="36.60" fill="rgb(34,211,238)" fill-opacity="0.367"/><rect x="34.59" y="93.10" width="6.85" height="92.70" fill="rgb(34,211,238)" fill-opacity="0.622"/><rect x="42.32" y="119.80" width="6.85" height="66.00" fill="rgb(34,211,238)" fill-opacity="0.501"/><rect x="50.05" y="103.80" width="6.85" height="82.00" fill="rgb(34,211,238)" fill-opacity="0.574"/><rect x="57.78" y="69.20" width="6.85" height="116.60" fill="rgb(34,211,238)" fill-opacity="0.731"/><rect x="65.51" y="117.10" width="6.85" height="68.70" fill="rgb(34,211,238)" fill-opacity="0.513"/><rect x="73.24" y="114.20" width="6.85" height="71.60" fill="rgb(34,211,238)" fill-opacity="0.526"/><rect x="80.97" y="93.10" width="6.85" height="92.70" fill="rgb(34,211,238)" fill-opacity="0.622"/><rect x="88.70" y="58.50" width="6.85" height="127.30" fill="rgb(34,211,238)" fill-opacity="0.780"/><rect x="96.43" y="88.10" width="6.85" height="97.70" fill="rgb(34,211,238)" fill-opacity="0.645"/><rect x="104.16" y="106.30" width="6.85" height="79.50" fill="rgb(34,211,238)" fill-opacity="0.562"/><rect x="111.89" y="109.30" width="6.85" height="76.50" fill="rgb(34,211,238)" fill-opacity="0.549"/><rect x="119.62" y="133.30" width="6.85" height="52.50" fill="rgb(34,211,238)" fill-opacity="0.439"/><rect x="127.35" y="109.30" width="6.85" height="76.50" fill="rgb(34,211,238)" fill-opacity="0.549"/><rect x="135.08" y="133.30" width="6.85" height="52.50" fill="rgb(34,211,238)" fill-opacity="0.439"/><rect x="142.81" y="141.00" width="6.85" height="44.80" fill="rgb(34,211,238)" fill-opacity="0.404"/><rect x="150.54" y="159.40" width="6.85" height="26.40" fill="rgb(34,211,238)" fill-opacity="0.320"/><rect x="158.27" y="151.70" width="6.85" height="34.10" fill="rgb(34,211,238)" fill-opacity="0.355"/><rect x="166.00" y="146.40" width="6.85" height="39.40" fill="rgb(34,211,238)" fill-opacity="0.380"/><rect x="173.73" y="165.20" width="6.85" height="20.60" fill="rgb(34,211,238)" fill-opacity="0.294"/><rect x="181.46" y="167.60" width="6.85" height="18.20" fill="rgb(34,211,238)" fill-opacity="0.283"/><rect x="189.19" y="149.20" width="6.85" height="36.60" fill="rgb(34,211,238)" fill-opacity="0.367"/><rect x="196.92" y="170.50" width="6.85" height="15.30" fill="rgb(34,211,238)" fill-opacity="0.270"/><rect x="204.65" y="170.50" width="6.85" height="15.30" fill="rgb(34,211,238)" fill-opacity="0.270"/><rect x="212.38" y="181.10" width="6.85" height="4.70" fill="rgb(34,211,238)" fill-opacity="0.221"/><rect x="220.11" y="178.30" width="6.85" height="7.50" fill="rgb(34,211,238)" fill-opacity="0.234"/><rect x="227.84" y="175.40" width="6.85" height="10.40" fill="rgb(34,211,238)" fill-opacity="0.247"/><rect x="243.30" y="167.60" width="6.85" height="18.20" fill="rgb(34,211,238)" fill-opacity="0.204"/><rect x="251.03" y="181.10" width="6.85" height="4.70" fill="rgb(34,211,238)" fill-opacity="0.159"/><rect x="258.76" y="178.30" width="6.85" height="7.50" fill="rgb(34,211,238)" fill-opacity="0.169"/><rect x="274.22" y="181.10" width="6.85" height="4.70" fill="rgb(34,211,238)" fill-opacity="0.159"/><rect x="281.95" y="181.10" width="6.85" height="4.70" fill="rgb(34,211,238)" fill-opacity="0.159"/><rect x="289.68" y="175.40" width="6.85" height="10.40" fill="rgb(34,211,238)" fill-opacity="0.178"/><rect x="305.14" y="181.10" width="6.85" height="4.70" fill="rgb(34,211,238)" fill-opacity="0.159"/><rect x="312.87" y="181.10" width="6.85" height="4.70" fill="rgb(34,211,238)" fill-opacity="0.159"/><rect x="336.06" y="181.10" width="6.85" height="4.70" fill="rgb(34,211,238)" fill-opacity="0.159"/><rect x="359.25" y="183.60" width="6.85" height="2.20" fill="rgb(34,211,238)" fill-opacity="0.151"/><rect x="421.09" y="183.60" width="6.85" height="2.20" fill="rgb(34,211,238)" fill-opacity="0.151"/><rect x="428.82" y="183.60" width="6.85" height="2.20" fill="rgb(34,211,238)" fill-opacity="0.151"/><line x1="18.40" y1="36" x2="18.40" y2="185.8" stroke="#8e72dc" stroke-width="1.3" stroke-dasharray="4 4"/><line x1="231.70" y1="36" x2="231.70" y2="185.8" stroke="#8e72dc" stroke-width="1.3" stroke-dasharray="4 4"/><line x1="107.60" y1="42" x2="107.60" y2="180.5" stroke="#34d399" stroke-width="2.2"/><line x1="65.00" y1="42" x2="65.00" y2="180.5" stroke="#f87171" stroke-width="2" stroke-dasharray="3 5"/><circle cx="36.58" cy="85.41" r="6.5" fill="url(#halocyan)"/><circle cx="36.58" cy="85.41" r="1.8" fill="#e6f7fb" fill-opacity="0.72"/><circle cx="40.26" cy="92.41" r="5" fill="url(#halocyan)" opacity="0.55"/><circle cx="40.26" cy="92.41" r="1.6" fill="#d8eef4" fill-opacity="0.35"/><circle cx="50.57" cy="98.30" r="5" fill="url(#halocyan)" opacity="0.55"/><circle cx="50.57" cy="98.30" r="1.6" fill="#d8eef4" fill-opacity="0.35"/><circle cx="59.90" cy="108.73" r="5" fill="url(#halocyan)" opacity="0.55"/><circle cx="59.90" cy="108.73" r="1.6" fill="#d8eef4" fill-opacity="0.35"/><circle cx="65.67" cy="82.34" r="6.5" fill="url(#halocyan)"/><circle cx="65.67" cy="82.34" r="1.8" fill="#e6f7fb" fill-opacity="0.72"/><circle cx="65.67" cy="100.51" r="6.5" fill="url(#halocyan)"/><circle cx="65.67" cy="100.51" r="1.8" fill="#e6f7fb" fill-opacity="0.72"/><circle cx="75.12" cy="116.47" r="5" fill="url(#halocyan)" opacity="0.55"/><circle cx="75.12" cy="116.47" r="1.6" fill="#d8eef4" fill-opacity="0.35"/><circle cx="95.13" cy="102.60" r="5" fill="url(#halocyan)" opacity="0.55"/><circle cx="95.13" cy="102.60" r="1.6" fill="#d8eef4" fill-opacity="0.35"/><circle cx="100.90" cy="94.62" r="5" fill="url(#halocyan)" opacity="0.55"/><circle cx="100.90" cy="94.62" r="1.6" fill="#d8eef4" fill-opacity="0.35"/><circle cx="104.58" cy="97.32" r="6.5" fill="url(#halocyan)"/><circle cx="104.58" cy="97.32" r="1.8" fill="#e6f7fb" fill-opacity="0.72"/><circle cx="92.30" cy="123.46" r="6.5" fill="url(#halocyan)"/><circle cx="92.30" cy="123.46" r="1.8" fill="#e6f7fb" fill-opacity="0.72"/><circle cx="114.15" cy="117.70" r="5" fill="url(#halocyan)" opacity="0.55"/><circle cx="114.15" cy="117.70" r="1.6" fill="#d8eef4" fill-opacity="0.35"/><circle cx="131.58" cy="107.51" r="5" fill="url(#halocyan)" opacity="0.55"/><circle cx="131.58" cy="107.51" r="1.6" fill="#d8eef4" fill-opacity="0.35"/><circle cx="39.03" cy="135.74" r="5" fill="url(#halocyan)" opacity="0.55"/><circle cx="39.03" cy="135.74" r="1.6" fill="#d8eef4" fill-opacity="0.35"/><circle cx="65.67" cy="137.83" r="6.5" fill="url(#halocyan)"/><circle cx="65.67" cy="137.83" r="1.8" fill="#e6f7fb" fill-opacity="0.72"/><circle cx="106.54" cy="137.83" r="6.5" fill="url(#halocyan)"/><circle cx="106.54" cy="137.83" r="1.8" fill="#e6f7fb" fill-opacity="0.72"/><circle cx="280.47" cy="89.46" r="5" fill="url(#halocyan)" opacity="0.55"/><circle cx="280.47" cy="89.46" r="1.6" fill="#d8eef4" fill-opacity="0.35"/></svg>
<div class="t" style="left:227.00px;top:726.25px;font-size:12.7px;color:#f87171">Current</div>
<div class="t" style="left:269.60px;top:726.25px;font-size:12.7px;color:#34d399">MCMC</div>
<div class="t" style="left:179.70px;top:854.63px;font-size:10px;color:rgba(229,231,235,0.45)">0.36</div>
<div class="t" style="left:352.70px;top:854.63px;font-size:10px;color:rgba(229,231,235,0.45)">3.29</div>
<div class="a" style="left:169px;top:873.8px;width:540.5px;height:14px;display:flex;justify-content:space-between;font-size:11.5px;line-height:14px;white-space:nowrap"><span style="color:#f87171">Now: <b style="color:#fca5a5">1</b></span><b style="color:#34d399;font-size:12.4px">1.589±0.859</b><span style="color:#a855f7;font-size:11px">[0.363,3.294]</span></div>
<div class="card" style="left:736px;top:681.8px"></div>
<div class="t" style="left:747.00px;top:696.89px;font-size:13.6px;color:#22d3ee"><b>Game Changer (Negative)</b></div>
<svg class="a" style="left:1072.5px;top:695.4px;" width="15" height="15" viewBox="0 0 15 15"><rect x="0" y="0" width="15" height="15" rx="2.10" fill="#3fc26f"/><path d="M3.30 7.80 L6.30 10.80 L12.00 4.50" fill="none" stroke="#fff" stroke-width="1.95" stroke-linecap="round" stroke-linejoin="round"/></svg>
<div class="t mono" style="left:1098.00px;top:696.80px;font-size:13.7px;color:#34d399">Converged — 600 samples</div>
<svg class="a" style="left:736px;top:681.8px;" width="563" height="218" viewBox="0 0 563 218"><defs><radialGradient id="halocyan"><stop offset="0" stop-color="rgb(34,211,238)" stop-opacity="0.45"/><stop offset="1" stop-color="rgb(34,211,238)" stop-opacity="0"/></radialGradient></defs><rect x="12.60" y="36" width="227.70" height="149.80" fill="#4a4b62" fill-opacity="0.85"/><rect x="11.40" y="175.00" width="6.85" height="10.80" fill="rgb(34,211,238)" fill-opacity="0.249"/><rect x="19.13" y="167.00" width="6.85" height="18.80" fill="rgb(34,211,238)" fill-opacity="0.286"/><rect x="26.86" y="150.80" width="6.85" height="35.00" fill="rgb(34,211,238)" fill-opacity="0.359"/><rect x="34.59" y="132.00" width="6.85" height="53.80" fill="rgb(34,211,238)" fill-opacity="0.445"/><rect x="42.32" y="94.40" width="6.85" height="91.40" fill="rgb(34,211,238)" fill-opacity="0.616"/><rect x="50.05" y="103.40" width="6.85" height="82.40" fill="rgb(34,211,238)" fill-opacity="0.575"/><rect x="57.78" y="108.30" width="6.85" height="77.50" fill="rgb(34,211,238)" fill-opacity="0.553"/><rect x="65.51" y="70.30" width="6.85" height="115.50" fill="rgb(34,211,238)" fill-opacity="0.726"/><rect x="73.24" y="101.40" width="6.85" height="84.40" fill="rgb(34,211,238)" fill-opacity="0.585"/><rect x="80.97" y="58.50" width="6.85" height="127.30" fill="rgb(34,211,238)" fill-opacity="0.780"/><rect x="88.70" y="113.00" width="6.85" height="72.80" fill="rgb(34,211,238)" fill-opacity="0.532"/><rect x="96.43" y="120.10" width="6.85" height="65.70" fill="rgb(34,211,238)" fill-opacity="0.499"/><rect x="104.16" y="122.20" width="6.85" height="63.60" fill="rgb(34,211,238)" fill-opacity="0.490"/><rect x="111.89" y="132.00" width="6.85" height="53.80" fill="rgb(34,211,238)" fill-opacity="0.445"/><rect x="119.62" y="113.00" width="6.85" height="72.80" fill="rgb(34,211,238)" fill-opacity="0.532"/><rect x="127.35" y="120.10" width="6.85" height="65.70" fill="rgb(34,211,238)" fill-opacity="0.499"/><rect x="135.08" y="148.40" width="6.85" height="37.40" fill="rgb(34,211,238)" fill-opacity="0.370"/><rect x="142.81" y="150.80" width="6.85" height="35.00" fill="rgb(34,211,238)" fill-opacity="0.359"/><rect x="150.54" y="132.00" width="6.85" height="53.80" fill="rgb(34,211,238)" fill-opacity="0.445"/><rect x="158.27" y="157.80" width="6.85" height="28.00" fill="rgb(34,211,238)" fill-opacity="0.328"/><rect x="166.00" y="165.20" width="6.85" height="20.60" fill="rgb(34,211,238)" fill-opacity="0.294"/><rect x="173.73" y="179.00" width="6.85" height="6.80" fill="rgb(34,211,238)" fill-opacity="0.231"/><rect x="181.46" y="179.00" width="6.85" height="6.80" fill="rgb(34,211,238)" fill-opacity="0.231"/><rect x="189.19" y="179.00" width="6.85" height="6.80" fill="rgb(34,211,238)" fill-opacity="0.231"/><rect x="196.92" y="176.60" width="6.85" height="9.20" fill="rgb(34,211,238)" fill-opacity="0.242"/><rect x="204.65" y="176.60" width="6.85" height="9.20" fill="rgb(34,211,238)" fill-opacity="0.242"/><rect x="212.38" y="183.60" width="6.85" height="2.20" fill="rgb(34,211,238)" fill-opacity="0.210"/><rect x="220.11" y="176.60" width="6.85" height="9.20" fill="rgb(34,211,238)" fill-opacity="0.242"/><rect x="227.84" y="169.50" width="6.85" height="16.30" fill="rgb(34,211,238)" fill-opacity="0.274"/><rect x="235.57" y="179.00" width="6.85" height="6.80" fill="rgb(34,211,238)" fill-opacity="0.231"/><rect x="251.03" y="181.50" width="6.85" height="4.30" fill="rgb(34,211,238)" fill-opacity="0.158"/><rect x="266.49" y="184.00" width="6.85" height="1.80" fill="rgb(34,211,238)" fill-opacity="0.150"/><rect x="274.22" y="181.50" width="6.85" height="4.30" fill="rgb(34,211,238)" fill-opacity="0.158"/><rect x="281.95" y="184.00" width="6.85" height="1.80" fill="rgb(34,211,238)" fill-opacity="0.150"/><rect x="289.68" y="184.00" width="6.85" height="1.80" fill="rgb(34,211,238)" fill-opacity="0.150"/><rect x="297.41" y="181.50" width="6.85" height="4.30" fill="rgb(34,211,238)" fill-opacity="0.158"/><rect x="305.14" y="179.00" width="6.85" height="6.80" fill="rgb(34,211,238)" fill-opacity="0.166"/><rect x="312.87" y="181.50" width="6.85" height="4.30" fill="rgb(34,211,238)" fill-opacity="0.158"/><rect x="320.60" y="184.00" width="6.85" height="1.80" fill="rgb(34,211,238)" fill-opacity="0.150"/><rect x="328.33" y="181.50" width="6.85" height="4.30" fill="rgb(34,211,238)" fill-opacity="0.158"/><rect x="336.06" y="181.50" width="6.85" height="4.30" fill="rgb(34,211,238)" fill-opacity="0.158"/><rect x="343.79" y="181.50" width="6.85" height="4.30" fill="rgb(34,211,238)" fill-opacity="0.158"/><rect x="359.25" y="181.50" width="6.85" height="4.30" fill="rgb(34,211,238)" fill-opacity="0.158"/><rect x="366.98" y="184.00" width="6.85" height="1.80" fill="rgb(34,211,238)" fill-opacity="0.150"/><rect x="413.36" y="184.00" width="6.85" height="1.80" fill="rgb(34,211,238)" fill-opacity="0.150"/><rect x="421.09" y="184.00" width="6.85" height="1.80" fill="rgb(34,211,238)" fill-opacity="0.150"/><rect x="428.82" y="184.00" width="6.85" height="1.80" fill="rgb(34,211,238)" fill-opacity="0.150"/><line x1="12.60" y1="36" x2="12.60" y2="185.8" stroke="#8e72dc" stroke-width="1.3" stroke-dasharray="4 4"/><line x1="240.30" y1="36" x2="240.30" y2="185.8" stroke="#8e72dc" stroke-width="1.3" stroke-dasharray="4 4"/><line x1="106.40" y1="42" x2="106.40" y2="180.5" stroke="#34d399" stroke-width="2.2"/><line x1="84.70" y1="42" x2="84.70" y2="180.5" stroke="#f87171" stroke-width="2" stroke-dasharray="3 5"/><circle cx="35.60" cy="88.24" r="6.5" fill="url(#halocyan)"/><circle cx="35.60" cy="88.24" r="1.8" fill="#e6f7fb" fill-opacity="0.72"/><circle cx="52.53" cy="87.87" r="6.5" fill="url(#halocyan)"/><circle cx="52.53" cy="87.87" r="1.8" fill="#e6f7fb" fill-opacity="0.72"/><circle cx="58.92" cy="81.73" r="5" fill="url(#halocyan)" opacity="0.55"/><circle cx="58.92" cy="81.73" r="1.6" fill="#d8eef4" fill-opacity="0.35"/><circle cx="66.90" cy="82.34" r="5" fill="url(#halocyan)" opacity="0.55"/><circle cx="66.90" cy="82.34" r="1.6" fill="#d8eef4" fill-opacity="0.35"/><circle cx="80.77" cy="106.65" r="5" fill="url(#halocyan)" opacity="0.55"/><circle cx="80.77" cy="106.65" r="1.6" fill="#d8eef4" fill-opacity="0.35"/><circle cx="66.90" cy="113.03" r="6.5" fill="url(#halocyan)"/><circle cx="66.90" cy="113.03" r="1.8" fill="#e6f7fb" fill-opacity="0.72"/><circle cx="54.99" cy="124.32" r="6.5" fill="url(#halocyan)"/><circle cx="54.99" cy="124.32" r="1.8" fill="#e6f7fb" fill-opacity="0.72"/><circle cx="39.03" cy="128.99" r="5" fill="url(#halocyan)" opacity="0.55"/><circle cx="39.03" cy="128.99" r="1.6" fill="#d8eef4" fill-opacity="0.35"/><circle cx="85.31" cy="127.51" r="5" fill="url(#halocyan)" opacity="0.55"/><circle cx="85.31" cy="127.51" r="1.6" fill="#d8eef4" fill-opacity="0.35"/><circle cx="66.90" cy="139.79" r="5" fill="url(#halocyan)" opacity="0.55"/><circle cx="66.90" cy="139.79" r="1.6" fill="#d8eef4" fill-opacity="0.35"/><circle cx="93.90" cy="87.25" r="6.5" fill="url(#halocyan)"/><circle cx="93.90" cy="87.25" r="1.8" fill="#e6f7fb" fill-opacity="0.72"/><circle cx="101.63" cy="85.41" r="6.5" fill="url(#halocyan)"/><circle cx="101.63" cy="85.41" r="1.8" fill="#e6f7fb" fill-opacity="0.72"/><circle cx="104.09" cy="118.92" r="5" fill="url(#halocyan)" opacity="0.55"/><circle cx="104.09" cy="118.92" r="1.6" fill="#d8eef4" fill-opacity="0.35"/><circle cx="117.59" cy="107.14" r="5" fill="url(#halocyan)" opacity="0.55"/><circle cx="117.59" cy="107.14" r="1.6" fill="#d8eef4" fill-opacity="0.35"/><circle cx="139.68" cy="89.96" r="5" fill="url(#halocyan)" opacity="0.55"/><circle cx="139.68" cy="89.96" r="1.6" fill="#d8eef4" fill-opacity="0.35"/></svg>
<div class="t" style="left:824.70px;top:726.25px;font-size:12.7px;color:#f87171">Current</div>
<div class="t" style="left:846.40px;top:726.25px;font-size:12.7px;color:#34d399">MCMC</div>
<div class="t" style="left:751.90px;top:854.63px;font-size:10px;color:rgba(229,231,235,0.45)">1.34</div>
<div class="t" style="left:939.30px;top:854.63px;font-size:10px;color:rgba(229,231,235,0.45)">12.90</div>
<div class="a" style="left:747px;top:873.8px;width:540.5px;height:14px;display:flex;justify-content:space-between;font-size:11.5px;line-height:14px;white-space:nowrap"><span style="color:#f87171">Now: <b style="color:#fca5a5">5</b></span><b style="color:#34d399;font-size:12.4px">6.107±3.421</b><span style="color:#a855f7;font-size:11px">[1.345,12.904]</span></div>
<div class="card" style="left:1314px;top:681.8px"></div>
<div class="t" style="left:1325.00px;top:696.89px;font-size:13.6px;color:#22d3ee"><b>Moderate Affirmation</b></div>
<svg class="a" style="left:1650.5px;top:695.4px;" width="15" height="15" viewBox="0 0 15 15"><rect x="0" y="0" width="15" height="15" rx="2.10" fill="#3fc26f"/><path d="M3.30 7.80 L6.30 10.80 L12.00 4.50" fill="none" stroke="#fff" stroke-width="1.95" stroke-linecap="round" stroke-linejoin="round"/></svg>
<div class="t mono" style="left:1676.00px;top:696.80px;font-size:13.7px;color:#34d399">Converged — 600 samples</div>
<svg class="a" style="left:1314px;top:681.8px;" width="563" height="218" viewBox="0 0 563 218"><defs><radialGradient id="halocyan"><stop offset="0" stop-color="rgb(34,211,238)" stop-opacity="0.45"/><stop offset="1" stop-color="rgb(34,211,238)" stop-opacity="0"/></radialGradient></defs><rect x="21.50" y="36" width="234.40" height="149.80" fill="#4a4b62" fill-opacity="0.85"/><rect x="11.40" y="177.50" width="6.85" height="8.30" fill="rgb(34,211,238)" fill-opacity="0.171"/><rect x="19.13" y="159.40" width="6.85" height="26.40" fill="rgb(34,211,238)" fill-opacity="0.320"/><rect x="26.86" y="153.30" width="6.85" height="32.50" fill="rgb(34,211,238)" fill-opacity="0.348"/><rect x="34.59" y="118.20" width="6.85" height="67.60" fill="rgb(34,211,238)" fill-opacity="0.508"/><rect x="42.32" y="109.30" width="6.85" height="76.50" fill="rgb(34,211,238)" fill-opacity="0.549"/><rect x="50.05" y="141.50" width="6.85" height="44.30" fill="rgb(34,211,238)" fill-opacity="0.402"/><rect x="57.78" y="130.00" width="6.85" height="55.80" fill="rgb(34,211,238)" fill-opacity="0.454"/><rect x="65.51" y="97.30" width="6.85" height="88.50" fill="rgb(34,211,238)" fill-opacity="0.603"/><rect x="73.24" y="94.40" width="6.85" height="91.40" fill="rgb(34,211,238)" fill-opacity="0.616"/><rect x="80.97" y="103.20" width="6.85" height="82.60" fill="rgb(34,211,238)" fill-opacity="0.576"/><rect x="88.70" y="97.30" width="6.85" height="88.50" fill="rgb(34,211,238)" fill-opacity="0.603"/><rect x="96.43" y="58.50" width="6.85" height="127.30" fill="rgb(34,211,238)" fill-opacity="0.780"/><rect x="104.16" y="100.10" width="6.85" height="85.70" fill="rgb(34,211,238)" fill-opacity="0.590"/><rect x="111.89" y="91.30" width="6.85" height="94.50" fill="rgb(34,211,238)" fill-opacity="0.631"/><rect x="119.62" y="112.40" width="6.85" height="73.40" fill="rgb(34,211,238)" fill-opacity="0.534"/><rect x="127.35" y="138.80" width="6.85" height="47.00" fill="rgb(34,211,238)" fill-opacity="0.414"/><rect x="135.08" y="130.00" width="6.85" height="55.80" fill="rgb(34,211,238)" fill-opacity="0.454"/><rect x="142.81" y="127.10" width="6.85" height="58.70" fill="rgb(34,211,238)" fill-opacity="0.467"/><rect x="150.54" y="112.40" width="6.85" height="73.40" fill="rgb(34,211,238)" fill-opacity="0.534"/><rect x="158.27" y="115.20" width="6.85" height="70.60" fill="rgb(34,211,238)" fill-opacity="0.522"/><rect x="166.00" y="132.90" width="6.85" height="52.90" fill="rgb(34,211,238)" fill-opacity="0.441"/><rect x="173.73" y="144.70" width="6.85" height="41.10" fill="rgb(34,211,238)" fill-opacity="0.387"/><rect x="181.46" y="141.90" width="6.85" height="43.90" fill="rgb(34,211,238)" fill-opacity="0.400"/><rect x="189.19" y="121.40" width="6.85" height="64.40" fill="rgb(34,211,238)" fill-opacity="0.493"/><rect x="196.92" y="147.40" width="6.85" height="38.40" fill="rgb(34,211,238)" fill-opacity="0.375"/><rect x="204.65" y="165.20" width="6.85" height="20.60" fill="rgb(34,211,238)" fill-opacity="0.294"/><rect x="212.38" y="150.40" width="6.85" height="35.40" fill="rgb(34,211,238)" fill-opacity="0.361"/><rect x="220.11" y="183.00" width="6.85" height="2.80" fill="rgb(34,211,238)" fill-opacity="0.213"/><rect x="227.84" y="168.20" width="6.85" height="17.60" fill="rgb(34,211,238)" fill-opacity="0.280"/><rect x="235.57" y="174.40" width="6.85" height="11.40" fill="rgb(34,211,238)" fill-opacity="0.252"/><rect x="243.30" y="177.10" width="6.85" height="8.70" fill="rgb(34,211,238)" fill-opacity="0.240"/><rect x="251.03" y="183.00" width="6.85" height="2.80" fill="rgb(34,211,238)" fill-opacity="0.213"/><rect x="258.76" y="180.30" width="6.85" height="5.50" fill="rgb(34,211,238)" fill-opacity="0.162"/><rect x="266.49" y="174.40" width="6.85" height="11.40" fill="rgb(34,211,238)" fill-opacity="0.181"/><rect x="274.22" y="180.30" width="6.85" height="5.50" fill="rgb(34,211,238)" fill-opacity="0.162"/><rect x="281.95" y="183.00" width="6.85" height="2.80" fill="rgb(34,211,238)" fill-opacity="0.153"/><rect x="289.68" y="183.00" width="6.85" height="2.80" fill="rgb(34,211,238)" fill-opacity="0.153"/><rect x="297.41" y="174.40" width="6.85" height="11.40" fill="rgb(34,211,238)" fill-opacity="0.181"/><rect x="305.14" y="183.00" width="6.85" height="2.80" fill="rgb(34,211,238)" fill-opacity="0.153"/><rect x="312.87" y="183.00" width="6.85" height="2.80" fill="rgb(34,211,238)" fill-opacity="0.153"/><rect x="320.60" y="180.30" width="6.85" height="5.50" fill="rgb(34,211,238)" fill-opacity="0.162"/><rect x="328.33" y="183.00" width="6.85" height="2.80" fill="rgb(34,211,238)" fill-opacity="0.153"/><rect x="336.06" y="183.00" width="6.85" height="2.80" fill="rgb(34,211,238)" fill-opacity="0.153"/><rect x="343.79" y="183.00" width="6.85" height="2.80" fill="rgb(34,211,238)" fill-opacity="0.153"/><rect x="359.25" y="180.30" width="6.85" height="5.50" fill="rgb(34,211,238)" fill-opacity="0.162"/><rect x="390.17" y="180.30" width="6.85" height="5.50" fill="rgb(34,211,238)" fill-opacity="0.162"/><rect x="428.82" y="183.00" width="6.85" height="2.80" fill="rgb(34,211,238)" fill-opacity="0.153"/><line x1="21.50" y1="36" x2="21.50" y2="185.8" stroke="#8e72dc" stroke-width="1.3" stroke-dasharray="4 4"/><line x1="255.90" y1="36" x2="255.90" y2="185.8" stroke="#8e72dc" stroke-width="1.3" stroke-dasharray="4 4"/><line x1="125.40" y1="42" x2="125.40" y2="180.5" stroke="#34d399" stroke-width="2.2"/><line x1="104.70" y1="42" x2="104.70" y2="180.5" stroke="#f87171" stroke-width="2" stroke-dasharray="3 5"/><circle cx="46.89" cy="91.92" r="5" fill="url(#halocyan)" opacity="0.55"/><circle cx="46.89" cy="91.92" r="1.6" fill="#d8eef4" fill-opacity="0.35"/><circle cx="55.48" cy="105.91" r="6.5" fill="url(#halocyan)"/><circle cx="55.48" cy="105.91" r="1.8" fill="#e6f7fb" fill-opacity="0.72"/><circle cx="46.89" cy="116.96" r="6.5" fill="url(#halocyan)"/><circle cx="46.89" cy="116.96" r="1.8" fill="#e6f7fb" fill-opacity="0.72"/><circle cx="44.80" cy="111.56" r="5" fill="url(#halocyan)" opacity="0.55"/><circle cx="44.80" cy="111.56" r="1.6" fill="#d8eef4" fill-opacity="0.35"/><circle cx="85.92" cy="82.10" r="5" fill="url(#halocyan)" opacity="0.55"/><circle cx="85.92" cy="82.10" r="1.6" fill="#d8eef4" fill-opacity="0.35"/><circle cx="93.04" cy="92.78" r="5" fill="url(#halocyan)" opacity="0.55"/><circle cx="93.04" cy="92.78" r="1.6" fill="#d8eef4" fill-opacity="0.35"/><circle cx="82.85" cy="102.60" r="6.5" fill="url(#halocyan)"/><circle cx="82.85" cy="102.60" r="1.8" fill="#e6f7fb" fill-opacity="0.72"/><circle cx="87.76" cy="130.46" r="6.5" fill="url(#halocyan)"/><circle cx="87.76" cy="130.46" r="1.8" fill="#e6f7fb" fill-opacity="0.72"/><circle cx="126.43" cy="122.61" r="5" fill="url(#halocyan)" opacity="0.55"/><circle cx="126.43" cy="122.61" r="1.6" fill="#d8eef4" fill-opacity="0.35"/><circle cx="145.45" cy="108.12" r="5" fill="url(#halocyan)" opacity="0.55"/><circle cx="145.45" cy="108.12" r="1.6" fill="#d8eef4" fill-opacity="0.35"/><circle cx="154.90" cy="110.33" r="5" fill="url(#halocyan)" opacity="0.55"/><circle cx="154.90" cy="110.33" r="1.6" fill="#d8eef4" fill-opacity="0.35"/><circle cx="145.45" cy="129.97" r="6.5" fill="url(#halocyan)"/><circle cx="145.45" cy="129.97" r="1.8" fill="#e6f7fb" fill-opacity="0.72"/><circle cx="172.46" cy="121.38" r="6.5" fill="url(#halocyan)"/><circle cx="172.46" cy="121.38" r="1.8" fill="#e6f7fb" fill-opacity="0.72"/><circle cx="170.61" cy="127.51" r="5" fill="url(#halocyan)" opacity="0.55"/><circle cx="170.61" cy="127.51" r="1.6" fill="#d8eef4" fill-opacity="0.35"/><circle cx="176.14" cy="101.74" r="5" fill="url(#halocyan)" opacity="0.55"/><circle cx="176.14" cy="101.74" r="1.6" fill="#d8eef4" fill-opacity="0.35"/><circle cx="193.69" cy="93.64" r="5" fill="url(#halocyan)" opacity="0.55"/><circle cx="193.69" cy="93.64" r="1.6" fill="#d8eef4" fill-opacity="0.35"/><circle cx="208.05" cy="109.35" r="6.5" fill="url(#halocyan)"/><circle cx="208.05" cy="109.35" r="1.8" fill="#e6f7fb" fill-opacity="0.72"/><circle cx="242.42" cy="104.44" r="6.5" fill="url(#halocyan)"/><circle cx="242.42" cy="104.44" r="1.8" fill="#e6f7fb" fill-opacity="0.72"/><circle cx="316.93" cy="101.74" r="5" fill="url(#halocyan)" opacity="0.55"/><circle cx="316.93" cy="101.74" r="1.6" fill="#d8eef4" fill-opacity="0.35"/></svg>
<div class="t" style="left:1422.70px;top:726.25px;font-size:12.7px;color:#f87171">Current</div>
<div class="t" style="left:1443.40px;top:726.25px;font-size:12.7px;color:#34d399">MCMC</div>
<div class="t" style="left:1338.80px;top:854.63px;font-size:10px;color:rgba(229,231,235,0.45)">0.19</div>
<div class="t" style="left:1532.90px;top:854.63px;font-size:10px;color:rgba(229,231,235,0.45)">1.63</div>
<div class="a" style="left:1325px;top:873.8px;width:540.5px;height:14px;display:flex;justify-content:space-between;font-size:11.5px;line-height:14px;white-space:nowrap"><span style="color:#f87171">Now: <b style="color:#fca5a5">0.7</b></span><b style="color:#34d399;font-size:12.4px">0.829±0.416</b><span style="color:#a855f7;font-size:11px">[0.186,1.634]</span></div>
<div class="card" style="left:1893px;top:681.8px"></div>
<div class="t" style="left:1904.00px;top:696.89px;font-size:13.6px;color:#22d3ee"><b>Moderate Nagative</b></div>
<svg class="a" style="left:2229.5px;top:695.4px;" width="15" height="15" viewBox="0 0 15 15"><rect x="0" y="0" width="15" height="15" rx="2.10" fill="#3fc26f"/><path d="M3.30 7.80 L6.30 10.80 L12.00 4.50" fill="none" stroke="#fff" stroke-width="1.95" stroke-linecap="round" stroke-linejoin="round"/></svg>
<div class="t mono" style="left:2255.00px;top:696.80px;font-size:13.7px;color:#34d399">Converged — 600 samples</div>
<svg class="a" style="left:1893px;top:681.8px;" width="563" height="218" viewBox="0 0 563 218"><defs><radialGradient id="halocyan"><stop offset="0" stop-color="rgb(34,211,238)" stop-opacity="0.45"/><stop offset="1" stop-color="rgb(34,211,238)" stop-opacity="0"/></radialGradient></defs><rect x="16.00" y="36" width="173.40" height="149.80" fill="#4a4b62" fill-opacity="0.85"/><rect x="11.40" y="167.30" width="6.85" height="18.50" fill="rgb(34,211,238)" fill-opacity="0.205"/><rect x="19.13" y="152.30" width="6.85" height="33.50" fill="rgb(34,211,238)" fill-opacity="0.353"/><rect x="26.86" y="133.30" width="6.85" height="52.50" fill="rgb(34,211,238)" fill-opacity="0.439"/><rect x="34.59" y="88.50" width="6.85" height="97.30" fill="rgb(34,211,238)" fill-opacity="0.643"/><rect x="42.32" y="88.50" width="6.85" height="97.30" fill="rgb(34,211,238)" fill-opacity="0.643"/><rect x="50.05" y="97.30" width="6.85" height="88.50" fill="rgb(34,211,238)" fill-opacity="0.603"/><rect x="57.78" y="58.50" width="6.85" height="127.30" fill="rgb(34,211,238)" fill-opacity="0.780"/><rect x="65.51" y="101.40" width="6.85" height="84.40" fill="rgb(34,211,238)" fill-opacity="0.585"/><rect x="73.24" y="101.40" width="6.85" height="84.40" fill="rgb(34,211,238)" fill-opacity="0.585"/><rect x="80.97" y="124.70" width="6.85" height="61.10" fill="rgb(34,211,238)" fill-opacity="0.478"/><rect x="88.70" y="124.70" width="6.85" height="61.10" fill="rgb(34,211,238)" fill-opacity="0.478"/><rect x="96.43" y="139.40" width="6.85" height="46.40" fill="rgb(34,211,238)" fill-opacity="0.411"/><rect x="104.16" y="116.40" width="6.85" height="69.40" fill="rgb(34,211,238)" fill-opacity="0.516"/><rect x="111.89" y="139.40" width="6.85" height="46.40" fill="rgb(34,211,238)" fill-opacity="0.411"/><rect x="119.62" y="131.20" width="6.85" height="54.60" fill="rgb(34,211,238)" fill-opacity="0.449"/><rect x="127.35" y="137.30" width="6.85" height="48.50" fill="rgb(34,211,238)" fill-opacity="0.421"/><rect x="135.08" y="145.90" width="6.85" height="39.90" fill="rgb(34,211,238)" fill-opacity="0.382"/><rect x="142.81" y="175.40" width="6.85" height="10.40" fill="rgb(34,211,238)" fill-opacity="0.247"/><rect x="150.54" y="152.30" width="6.85" height="33.50" fill="rgb(34,211,238)" fill-opacity="0.353"/><rect x="158.27" y="169.20" width="6.85" height="16.60" fill="rgb(34,211,238)" fill-opacity="0.276"/><rect x="166.00" y="175.40" width="6.85" height="10.40" fill="rgb(34,211,238)" fill-opacity="0.247"/><rect x="173.73" y="177.80" width="6.85" height="8.00" fill="rgb(34,211,238)" fill-opacity="0.236"/><rect x="181.46" y="167.30" width="6.85" height="18.50" fill="rgb(34,211,238)" fill-opacity="0.284"/><rect x="189.19" y="175.40" width="6.85" height="10.40" fill="rgb(34,211,238)" fill-opacity="0.178"/><rect x="196.92" y="182.40" width="6.85" height="3.40" fill="rgb(34,211,238)" fill-opacity="0.155"/><rect x="204.65" y="179.90" width="6.85" height="5.90" fill="rgb(34,211,238)" fill-opacity="0.163"/><rect x="212.38" y="179.90" width="6.85" height="5.90" fill="rgb(34,211,238)" fill-opacity="0.163"/><rect x="227.84" y="182.40" width="6.85" height="3.40" fill="rgb(34,211,238)" fill-opacity="0.155"/><rect x="266.49" y="184.40" width="6.85" height="1.40" fill="rgb(34,211,238)" fill-opacity="0.149"/><rect x="274.22" y="182.40" width="6.85" height="3.40" fill="rgb(34,211,238)" fill-opacity="0.155"/><rect x="281.95" y="184.40" width="6.85" height="1.40" fill="rgb(34,211,238)" fill-opacity="0.149"/><rect x="289.68" y="182.40" width="6.85" height="3.40" fill="rgb(34,211,238)" fill-opacity="0.155"/><rect x="297.41" y="184.40" width="6.85" height="1.40" fill="rgb(34,211,238)" fill-opacity="0.149"/><rect x="382.44" y="184.40" width="6.85" height="1.40" fill="rgb(34,211,238)" fill-opacity="0.149"/><rect x="428.82" y="184.40" width="6.85" height="1.40" fill="rgb(34,211,238)" fill-opacity="0.149"/><line x1="16.00" y1="36" x2="16.00" y2="185.8" stroke="#8e72dc" stroke-width="1.3" stroke-dasharray="4 4"/><line x1="189.40" y1="36" x2="189.40" y2="185.8" stroke="#8e72dc" stroke-width="1.3" stroke-dasharray="4 4"/><line x1="91.40" y1="42" x2="91.40" y2="180.5" stroke="#34d399" stroke-width="2.2"/><line x1="78.20" y1="42" x2="78.20" y2="180.5" stroke="#f87171" stroke-width="2" stroke-dasharray="3 5"/><circle cx="44.43" cy="81.36" r="5" fill="url(#halocyan)" opacity="0.55"/><circle cx="44.43" cy="81.36" r="1.6" fill="#d8eef4" fill-opacity="0.35"/><circle cx="54.62" cy="89.10" r="5" fill="url(#halocyan)" opacity="0.55"/><circle cx="54.62" cy="89.10" r="1.6" fill="#d8eef4" fill-opacity="0.35"/><circle cx="51.31" cy="84.19" r="6.5" fill="url(#halocyan)"/><circle cx="51.31" cy="84.19" r="1.8" fill="#e6f7fb" fill-opacity="0.72"/><circle cx="68.49" cy="97.32" r="6.5" fill="url(#halocyan)"/><circle cx="68.49" cy="97.32" r="1.8" fill="#e6f7fb" fill-opacity="0.72"/><circle cx="27.99" cy="126.29" r="5" fill="url(#halocyan)" opacity="0.55"/><circle cx="27.99" cy="126.29" r="1.6" fill="#d8eef4" fill-opacity="0.35"/><circle cx="23.57" cy="128.01" r="5" fill="url(#halocyan)" opacity="0.55"/><circle cx="23.57" cy="128.01" r="1.6" fill="#d8eef4" fill-opacity="0.35"/><circle cx="33.75" cy="121.38" r="5" fill="url(#halocyan)" opacity="0.55"/><circle cx="33.75" cy="121.38" r="1.6" fill="#d8eef4" fill-opacity="0.35"/><circle cx="37.81" cy="90.32" r="6.5" fill="url(#halocyan)"/><circle cx="37.81" cy="90.32" r="1.8" fill="#e6f7fb" fill-opacity="0.72"/><circle cx="37.81" cy="101.74" r="6.5" fill="url(#halocyan)"/><circle cx="37.81" cy="101.74" r="1.8" fill="#e6f7fb" fill-opacity="0.72"/><circle cx="50.57" cy="101.98" r="5" fill="url(#halocyan)" opacity="0.55"/><circle cx="50.57" cy="101.98" r="1.6" fill="#d8eef4" fill-opacity="0.35"/><circle cx="57.08" cy="114.50" r="5" fill="url(#halocyan)" opacity="0.55"/><circle cx="57.08" cy="114.50" r="1.6" fill="#d8eef4" fill-opacity="0.35"/><circle cx="54.01" cy="117.33" r="5" fill="url(#halocyan)" opacity="0.55"/><circle cx="54.01" cy="117.33" r="1.6" fill="#d8eef4" fill-opacity="0.35"/><circle cx="53.39" cy="125.31" r="6.5" fill="url(#halocyan)"/><circle cx="53.39" cy="125.31" r="1.8" fill="#e6f7fb" fill-opacity="0.72"/><circle cx="51.55" cy="133.65" r="6.5" fill="url(#halocyan)"/><circle cx="51.55" cy="133.65" r="1.8" fill="#e6f7fb" fill-opacity="0.72"/><circle cx="49.10" cy="139.79" r="5" fill="url(#halocyan)" opacity="0.55"/><circle cx="49.10" cy="139.79" r="1.6" fill="#d8eef4" fill-opacity="0.35"/><circle cx="28.84" cy="137.58" r="5" fill="url(#halocyan)" opacity="0.55"/><circle cx="28.84" cy="137.58" r="1.6" fill="#d8eef4" fill-opacity="0.35"/></svg>
<div class="t" style="left:1975.20px;top:726.25px;font-size:12.7px;color:#f87171">Current</div>
<div class="t" style="left:1988.40px;top:726.25px;font-size:12.7px;color:#34d399">MCMC</div>
<div class="t" style="left:1912.30px;top:854.63px;font-size:10px;color:rgba(229,231,235,0.45)">0.20</div>
<div class="t" style="left:2045.40px;top:854.63px;font-size:10px;color:rgba(229,231,235,0.45)">1.59</div>
<div class="a" style="left:1904px;top:873.8px;width:540.5px;height:14px;display:flex;justify-content:space-between;font-size:11.5px;line-height:14px;white-space:nowrap"><span style="color:#f87171">Now: <b style="color:#fca5a5">0.7</b></span><b style="color:#34d399;font-size:12.4px">0.807±0.398</b><span style="color:#a855f7;font-size:11px">[0.2,1.594]</span></div>
<div class="card" style="left:158px;top:916.0px"></div>
<div class="t" style="left:169.00px;top:931.09px;font-size:13.6px;color:#818cf8"><b>dampening</b></div>
<svg class="a" style="left:494.5px;top:929.6px;" width="15" height="15" viewBox="0 0 15 15"><rect x="0" y="0" width="15" height="15" rx="2.10" fill="#3fc26f"/><path d="M3.30 7.80 L6.30 10.80 L12.00 4.50" fill="none" stroke="#fff" stroke-width="1.95" stroke-linecap="round" stroke-linejoin="round"/></svg>
<div class="t mono" style="left:520.00px;top:931.00px;font-size:13.7px;color:#34d399">Converged — 600 samples</div>
<svg class="a" style="left:158px;top:916.0px;" width="563" height="218" viewBox="0 0 563 218"><defs><radialGradient id="halopurple"><stop offset="0" stop-color="rgb(165,170,250)" stop-opacity="0.45"/><stop offset="1" stop-color="rgb(165,170,250)" stop-opacity="0"/></radialGradient></defs><rect x="44.00" y="36" width="270.40" height="149.80" fill="#4a4b62" fill-opacity="0.85"/><rect x="11.40" y="182.50" width="6.85" height="3.30" fill="rgb(129,140,248)" fill-opacity="0.155"/><rect x="19.13" y="182.50" width="6.85" height="3.30" fill="rgb(129,140,248)" fill-opacity="0.155"/><rect x="34.59" y="155.10" width="6.85" height="30.70" fill="rgb(129,140,248)" fill-opacity="0.245"/><rect x="50.05" y="155.10" width="6.85" height="30.70" fill="rgb(129,140,248)" fill-opacity="0.340"/><rect x="57.78" y="167.00" width="6.85" height="18.80" fill="rgb(129,140,248)" fill-opacity="0.286"/><rect x="65.51" y="167.00" width="6.85" height="18.80" fill="rgb(129,140,248)" fill-opacity="0.286"/><rect x="73.24" y="151.40" width="6.85" height="34.40" fill="rgb(129,140,248)" fill-opacity="0.357"/><rect x="80.97" y="143.70" width="6.85" height="42.10" fill="rgb(129,140,248)" fill-opacity="0.392"/><rect x="88.70" y="147.40" width="6.85" height="38.40" fill="rgb(129,140,248)" fill-opacity="0.375"/><rect x="96.43" y="124.40" width="6.85" height="61.40" fill="rgb(129,140,248)" fill-opacity="0.480"/><rect x="104.16" y="132.20" width="6.85" height="53.60" fill="rgb(129,140,248)" fill-opacity="0.444"/><rect x="111.89" y="78.20" width="6.85" height="107.60" fill="rgb(129,140,248)" fill-opacity="0.690"/><rect x="119.62" y="66.10" width="6.85" height="119.70" fill="rgb(129,140,248)" fill-opacity="0.745"/><rect x="127.35" y="93.40" width="6.85" height="92.40" fill="rgb(129,140,248)" fill-opacity="0.621"/><rect x="135.08" y="105.20" width="6.85" height="80.60" fill="rgb(129,140,248)" fill-opacity="0.567"/><rect x="142.81" y="78.20" width="6.85" height="107.60" fill="rgb(129,140,248)" fill-opacity="0.690"/><rect x="150.54" y="74.10" width="6.85" height="111.70" fill="rgb(129,140,248)" fill-opacity="0.709"/><rect x="158.27" y="89.70" width="6.85" height="96.10" fill="rgb(129,140,248)" fill-opacity="0.638"/><rect x="166.00" y="58.80" width="6.85" height="127.00" fill="rgb(129,140,248)" fill-opacity="0.779"/><rect x="173.73" y="74.10" width="6.85" height="111.70" fill="rgb(129,140,248)" fill-opacity="0.709"/><rect x="181.46" y="124.40" width="6.85" height="61.40" fill="rgb(129,140,248)" fill-opacity="0.480"/><rect x="189.19" y="97.40" width="6.85" height="88.40" fill="rgb(129,140,248)" fill-opacity="0.603"/><rect x="196.92" y="109.10" width="6.85" height="76.70" fill="rgb(129,140,248)" fill-opacity="0.549"/><rect x="204.65" y="109.10" width="6.85" height="76.70" fill="rgb(129,140,248)" fill-opacity="0.549"/><rect x="212.38" y="140.00" width="6.85" height="45.80" fill="rgb(129,140,248)" fill-opacity="0.409"/><rect x="220.11" y="147.40" width="6.85" height="38.40" fill="rgb(129,140,248)" fill-opacity="0.375"/><rect x="227.84" y="124.40" width="6.85" height="61.40" fill="rgb(129,140,248)" fill-opacity="0.480"/><rect x="235.57" y="109.10" width="6.85" height="76.70" fill="rgb(129,140,248)" fill-opacity="0.549"/><rect x="243.30" y="86.00" width="6.85" height="99.80" fill="rgb(129,140,248)" fill-opacity="0.655"/><rect x="251.03" y="140.00" width="6.85" height="45.80" fill="rgb(129,140,248)" fill-opacity="0.409"/><rect x="258.76" y="151.40" width="6.85" height="34.40" fill="rgb(129,140,248)" fill-opacity="0.357"/><rect x="266.49" y="136.10" width="6.85" height="49.70" fill="rgb(129,140,248)" fill-opacity="0.426"/><rect x="274.22" y="151.40" width="6.85" height="34.40" fill="rgb(129,140,248)" fill-opacity="0.357"/><rect x="281.95" y="136.10" width="6.85" height="49.70" fill="rgb(129,140,248)" fill-opacity="0.426"/><rect x="289.68" y="159.20" width="6.85" height="26.60" fill="rgb(129,140,248)" fill-opacity="0.321"/><rect x="297.41" y="155.10" width="6.85" height="30.70" fill="rgb(129,140,248)" fill-opacity="0.340"/><rect x="305.14" y="163.10" width="6.85" height="22.70" fill="rgb(129,140,248)" fill-opacity="0.303"/><rect x="312.87" y="167.00" width="6.85" height="18.80" fill="rgb(129,140,248)" fill-opacity="0.206"/><rect x="320.60" y="178.40" width="6.85" height="7.40" fill="rgb(129,140,248)" fill-opacity="0.168"/><rect x="328.33" y="174.40" width="6.85" height="11.40" fill="rgb(129,140,248)" fill-opacity="0.181"/><rect x="336.06" y="182.50" width="6.85" height="3.30" fill="rgb(129,140,248)" fill-opacity="0.155"/><rect x="343.79" y="178.40" width="6.85" height="7.40" fill="rgb(129,140,248)" fill-opacity="0.168"/><rect x="351.52" y="174.40" width="6.85" height="11.40" fill="rgb(129,140,248)" fill-opacity="0.181"/><rect x="374.71" y="182.50" width="6.85" height="3.30" fill="rgb(129,140,248)" fill-opacity="0.155"/><rect x="390.17" y="182.50" width="6.85" height="3.30" fill="rgb(129,140,248)" fill-opacity="0.155"/><rect x="397.90" y="178.40" width="6.85" height="7.40" fill="rgb(129,140,248)" fill-opacity="0.168"/><rect x="413.36" y="182.50" width="6.85" height="3.30" fill="rgb(129,140,248)" fill-opacity="0.155"/><rect x="428.82" y="182.50" width="6.85" height="3.30" fill="rgb(129,140,248)" fill-opacity="0.155"/><line x1="44.00" y1="36" x2="44.00" y2="185.8" stroke="#8e72dc" stroke-width="1.3" stroke-dasharray="4 4"/><line x1="314.40" y1="36" x2="314.40" y2="185.8" stroke="#8e72dc" stroke-width="1.3" stroke-dasharray="4 4"/><line x1="179.50" y1="42" x2="179.50" y2="180.5" stroke="#34d399" stroke-width="2.2"/><line x1="174.00" y1="42" x2="174.00" y2="180.5" stroke="#f87171" stroke-width="2" stroke-dasharray="3 5"/><circle cx="86.90" cy="115.30" r="5" fill="url(#halopurple)" opacity="0.55"/><circle cx="86.90" cy="115.30" r="1.6" fill="#d8eef4" fill-opacity="0.35"/><circle cx="121.27" cy="127.58" r="5" fill="url(#halopurple)" opacity="0.55"/><circle cx="121.27" cy="127.58" r="1.6" fill="#d8eef4" fill-opacity="0.35"/><circle cx="142.63" cy="120.95" r="5" fill="url(#halopurple)" opacity="0.55"/><circle cx="142.63" cy="120.95" r="1.6" fill="#d8eef4" fill-opacity="0.35"/><circle cx="157.11" cy="122.67" r="6.5" fill="url(#halopurple)"/><circle cx="157.11" cy="122.67" r="1.8" fill="#e6f7fb" fill-opacity="0.72"/><circle cx="157.11" cy="137.77" r="6.5" fill="url(#halopurple)"/><circle cx="157.11" cy="137.77" r="1.8" fill="#e6f7fb" fill-opacity="0.72"/><circle cx="164.23" cy="89.90" r="5" fill="url(#halopurple)" opacity="0.55"/><circle cx="164.23" cy="89.90" r="1.6" fill="#d8eef4" fill-opacity="0.35"/><circle cx="177.37" cy="105.24" r="5" fill="url(#halopurple)" opacity="0.55"/><circle cx="177.37" cy="105.24" r="1.6" fill="#d8eef4" fill-opacity="0.35"/><circle cx="201.30" cy="91.74" r="5" fill="url(#halopurple)" opacity="0.55"/><circle cx="201.30" cy="91.74" r="1.6" fill="#d8eef4" fill-opacity="0.35"/><circle cx="203.14" cy="83.39" r="6.5" fill="url(#halopurple)"/><circle cx="203.14" cy="83.39" r="1.8" fill="#e6f7fb" fill-opacity="0.72"/><circle cx="210.14" cy="101.80" r="6.5" fill="url(#halopurple)"/><circle cx="210.14" cy="101.80" r="1.8" fill="#e6f7fb" fill-opacity="0.72"/><circle cx="210.14" cy="136.91" r="5" fill="url(#halopurple)" opacity="0.55"/><circle cx="210.14" cy="136.91" r="1.6" fill="#d8eef4" fill-opacity="0.35"/><circle cx="219.47" cy="119.97" r="5" fill="url(#halopurple)" opacity="0.55"/><circle cx="219.47" cy="119.97" r="1.6" fill="#d8eef4" fill-opacity="0.35"/><circle cx="237.88" cy="85.35" r="5" fill="url(#halopurple)" opacity="0.55"/><circle cx="237.88" cy="85.35" r="1.6" fill="#d8eef4" fill-opacity="0.35"/><circle cx="245.24" cy="109.17" r="6.5" fill="url(#halopurple)"/><circle cx="245.24" cy="109.17" r="1.8" fill="#e6f7fb" fill-opacity="0.72"/><circle cx="253.10" cy="127.95" r="6.5" fill="url(#halopurple)"/><circle cx="253.10" cy="127.95" r="1.8" fill="#e6f7fb" fill-opacity="0.72"/><circle cx="264.51" cy="115.06" r="5" fill="url(#halopurple)" opacity="0.55"/><circle cx="264.51" cy="115.06" r="1.6" fill="#d8eef4" fill-opacity="0.35"/><circle cx="279.24" cy="140.22" r="5" fill="url(#halopurple)" opacity="0.55"/><circle cx="279.24" cy="140.22" r="1.6" fill="#d8eef4" fill-opacity="0.35"/><circle cx="326.26" cy="109.53" r="5" fill="url(#halopurple)" opacity="0.55"/><circle cx="326.26" cy="109.53" r="1.6" fill="#d8eef4" fill-opacity="0.35"/></svg>
<div class="t" style="left:336.00px;top:960.45px;font-size:12.7px;color:#f87171">Current</div>
<div class="t" style="left:341.50px;top:960.45px;font-size:12.7px;color:#34d399">MCMC</div>
<div class="t" style="left:205.30px;top:1088.84px;font-size:10px;color:rgba(229,231,235,0.45)">0.08</div>
<div class="t" style="left:435.40px;top:1088.84px;font-size:10px;color:rgba(229,231,235,0.45)">0.43</div>
<div class="a" style="left:169px;top:1108.0px;width:540.5px;height:14px;display:flex;justify-content:space-between;font-size:11.5px;line-height:14px;white-space:nowrap"><span style="color:#f87171">Now: <b style="color:#fca5a5">0.25</b></span><b style="color:#34d399;font-size:12.4px">0.257±0.094</b><span style="color:#a855f7;font-size:11px">[0.078,0.435]</span></div>
<div class="card" style="left:736px;top:916.0px"></div>
<div class="t" style="left:747.00px;top:931.09px;font-size:13.6px;color:#fb7185"><b>silence_ratio</b></div>
<svg class="a" style="left:1072.5px;top:929.6px;" width="15" height="15" viewBox="0 0 15 15"><rect x="0" y="0" width="15" height="15" rx="2.10" fill="#3fc26f"/><path d="M3.30 7.80 L6.30 10.80 L12.00 4.50" fill="none" stroke="#fff" stroke-width="1.95" stroke-linecap="round" stroke-linejoin="round"/></svg>
<div class="t mono" style="left:1098.00px;top:931.00px;font-size:13.7px;color:#34d399">Converged — 600 samples</div>
<svg class="a" style="left:736px;top:916.0px;" width="563" height="218" viewBox="0 0 563 218"><defs><radialGradient id="halopink"><stop offset="0" stop-color="rgb(251,150,170)" stop-opacity="0.45"/><stop offset="1" stop-color="rgb(251,150,170)" stop-opacity="0"/></radialGradient></defs><rect x="16.30" y="36" width="291.30" height="149.80" fill="#4a4b62" fill-opacity="0.85"/><rect x="11.40" y="175.40" width="6.85" height="10.40" fill="rgb(251,113,133)" fill-opacity="0.178"/><rect x="19.13" y="171.10" width="6.85" height="14.70" fill="rgb(251,113,133)" fill-opacity="0.267"/><rect x="26.86" y="144.90" width="6.85" height="40.90" fill="rgb(251,113,133)" fill-opacity="0.386"/><rect x="34.59" y="167.00" width="6.85" height="18.80" fill="rgb(251,113,133)" fill-opacity="0.286"/><rect x="42.32" y="148.40" width="6.85" height="37.40" fill="rgb(251,113,133)" fill-opacity="0.370"/><rect x="50.05" y="133.60" width="6.85" height="52.20" fill="rgb(251,113,133)" fill-opacity="0.438"/><rect x="57.78" y="118.70" width="6.85" height="67.10" fill="rgb(251,113,133)" fill-opacity="0.506"/><rect x="65.51" y="122.30" width="6.85" height="63.50" fill="rgb(251,113,133)" fill-opacity="0.489"/><rect x="73.24" y="81.10" width="6.85" height="104.70" fill="rgb(251,113,133)" fill-opacity="0.677"/><rect x="80.97" y="122.30" width="6.85" height="63.50" fill="rgb(251,113,133)" fill-opacity="0.489"/><rect x="88.70" y="81.10" width="6.85" height="104.70" fill="rgb(251,113,133)" fill-opacity="0.677"/><rect x="96.43" y="84.80" width="6.85" height="101.00" fill="rgb(251,113,133)" fill-opacity="0.660"/><rect x="104.16" y="99.90" width="6.85" height="85.90" fill="rgb(251,113,133)" fill-opacity="0.591"/><rect x="111.89" y="88.50" width="6.85" height="97.30" fill="rgb(251,113,133)" fill-opacity="0.643"/><rect x="119.62" y="126.00" width="6.85" height="59.80" fill="rgb(251,113,133)" fill-opacity="0.472"/><rect x="127.35" y="81.10" width="6.85" height="104.70" fill="rgb(251,113,133)" fill-opacity="0.677"/><rect x="135.08" y="107.20" width="6.85" height="78.60" fill="rgb(251,113,133)" fill-opacity="0.558"/><rect x="142.81" y="103.60" width="6.85" height="82.20" fill="rgb(251,113,133)" fill-opacity="0.575"/><rect x="150.54" y="115.00" width="6.85" height="70.80" fill="rgb(251,113,133)" fill-opacity="0.523"/><rect x="158.27" y="81.10" width="6.85" height="104.70" fill="rgb(251,113,133)" fill-opacity="0.677"/><rect x="166.00" y="96.20" width="6.85" height="89.60" fill="rgb(251,113,133)" fill-opacity="0.608"/><rect x="173.73" y="58.50" width="6.85" height="127.30" fill="rgb(251,113,133)" fill-opacity="0.780"/><rect x="181.46" y="73.50" width="6.85" height="112.30" fill="rgb(251,113,133)" fill-opacity="0.712"/><rect x="189.19" y="115.00" width="6.85" height="70.80" fill="rgb(251,113,133)" fill-opacity="0.523"/><rect x="196.92" y="156.00" width="6.85" height="29.80" fill="rgb(251,113,133)" fill-opacity="0.336"/><rect x="204.65" y="115.00" width="6.85" height="70.80" fill="rgb(251,113,133)" fill-opacity="0.523"/><rect x="212.38" y="130.00" width="6.85" height="55.80" fill="rgb(251,113,133)" fill-opacity="0.454"/><rect x="220.11" y="141.20" width="6.85" height="44.60" fill="rgb(251,113,133)" fill-opacity="0.403"/><rect x="227.84" y="144.90" width="6.85" height="40.90" fill="rgb(251,113,133)" fill-opacity="0.386"/><rect x="235.57" y="156.00" width="6.85" height="29.80" fill="rgb(251,113,133)" fill-opacity="0.336"/><rect x="243.30" y="156.00" width="6.85" height="29.80" fill="rgb(251,113,133)" fill-opacity="0.336"/><rect x="251.03" y="171.10" width="6.85" height="14.70" fill="rgb(251,113,133)" fill-opacity="0.267"/><rect x="258.76" y="148.40" width="6.85" height="37.40" fill="rgb(251,113,133)" fill-opacity="0.370"/><rect x="266.49" y="160.00" width="6.85" height="25.80" fill="rgb(251,113,133)" fill-opacity="0.318"/><rect x="274.22" y="178.80" width="6.85" height="7.00" fill="rgb(251,113,133)" fill-opacity="0.232"/><rect x="281.95" y="178.80" width="6.85" height="7.00" fill="rgb(251,113,133)" fill-opacity="0.232"/><rect x="289.68" y="178.80" width="6.85" height="7.00" fill="rgb(251,113,133)" fill-opacity="0.232"/><rect x="297.41" y="178.80" width="6.85" height="7.00" fill="rgb(251,113,133)" fill-opacity="0.232"/><rect x="305.14" y="178.80" width="6.85" height="7.00" fill="rgb(251,113,133)" fill-opacity="0.167"/><rect x="312.87" y="167.00" width="6.85" height="18.80" fill="rgb(251,113,133)" fill-opacity="0.206"/><rect x="320.60" y="175.10" width="6.85" height="10.70" fill="rgb(251,113,133)" fill-opacity="0.179"/><rect x="328.33" y="182.50" width="6.85" height="3.30" fill="rgb(251,113,133)" fill-opacity="0.155"/><rect x="336.06" y="182.50" width="6.85" height="3.30" fill="rgb(251,113,133)" fill-opacity="0.155"/><rect x="343.79" y="178.40" width="6.85" height="7.40" fill="rgb(251,113,133)" fill-opacity="0.168"/><rect x="351.52" y="182.50" width="6.85" height="3.30" fill="rgb(251,113,133)" fill-opacity="0.155"/><rect x="428.82" y="182.50" width="6.85" height="3.30" fill="rgb(251,113,133)" fill-opacity="0.155"/><line x1="16.30" y1="36" x2="16.30" y2="185.8" stroke="#8e72dc" stroke-width="1.3" stroke-dasharray="4 4"/><line x1="307.60" y1="36" x2="307.60" y2="185.8" stroke="#8e72dc" stroke-width="1.3" stroke-dasharray="4 4"/><line x1="156.50" y1="42" x2="156.50" y2="180.5" stroke="#34d399" stroke-width="2.2"/><line x1="158.10" y1="42" x2="158.10" y2="180.5" stroke="#f87171" stroke-width="2" stroke-dasharray="3 5"/><circle cx="12.89" cy="125.12" r="6.5" fill="url(#halopink)"/><circle cx="12.89" cy="125.12" r="1.8" fill="#e6f7fb" fill-opacity="0.72"/><circle cx="39.89" cy="109.90" r="5" fill="url(#halopink)" opacity="0.55"/><circle cx="39.89" cy="109.90" r="1.6" fill="#d8eef4" fill-opacity="0.35"/><circle cx="61.13" cy="81.67" r="5" fill="url(#halopink)" opacity="0.55"/><circle cx="61.13" cy="81.67" r="1.6" fill="#d8eef4" fill-opacity="0.35"/><circle cx="61.13" cy="114.08" r="5" fill="url(#halopink)" opacity="0.55"/><circle cx="61.13" cy="114.08" r="1.6" fill="#d8eef4" fill-opacity="0.35"/><circle cx="75.86" cy="104.99" r="6.5" fill="url(#halopink)"/><circle cx="75.86" cy="104.99" r="1.8" fill="#e6f7fb" fill-opacity="0.72"/><circle cx="80.03" cy="111.62" r="6.5" fill="url(#halopink)"/><circle cx="80.03" cy="111.62" r="1.8" fill="#e6f7fb" fill-opacity="0.72"/><circle cx="76.35" cy="137.15" r="5" fill="url(#halopink)" opacity="0.55"/><circle cx="76.35" cy="137.15" r="1.6" fill="#d8eef4" fill-opacity="0.35"/><circle cx="119.31" cy="99.10" r="5" fill="url(#halopink)" opacity="0.55"/><circle cx="119.31" cy="99.10" r="1.6" fill="#d8eef4" fill-opacity="0.35"/><circle cx="121.76" cy="138.13" r="5" fill="url(#halopink)" opacity="0.55"/><circle cx="121.76" cy="138.13" r="1.6" fill="#d8eef4" fill-opacity="0.35"/><circle cx="132.32" cy="127.09" r="6.5" fill="url(#halopink)"/><circle cx="132.32" cy="127.09" r="1.8" fill="#e6f7fb" fill-opacity="0.72"/><circle cx="132.32" cy="137.15" r="6.5" fill="url(#halopink)"/><circle cx="132.32" cy="137.15" r="1.8" fill="#e6f7fb" fill-opacity="0.72"/><circle cx="131.58" cy="106.71" r="5" fill="url(#halopink)" opacity="0.55"/><circle cx="131.58" cy="106.71" r="1.6" fill="#d8eef4" fill-opacity="0.35"/><circle cx="141.77" cy="86.58" r="5" fill="url(#halopink)" opacity="0.55"/><circle cx="141.77" cy="86.58" r="1.6" fill="#d8eef4" fill-opacity="0.35"/><circle cx="185.10" cy="114.44" r="5" fill="url(#halopink)" opacity="0.55"/><circle cx="185.10" cy="114.44" r="1.6" fill="#d8eef4" fill-opacity="0.35"/><circle cx="185.10" cy="135.31" r="6.5" fill="url(#halopink)"/><circle cx="185.10" cy="135.31" r="1.8" fill="#e6f7fb" fill-opacity="0.72"/><circle cx="192.46" cy="104.01" r="6.5" fill="url(#halopink)"/><circle cx="192.46" cy="104.01" r="1.8" fill="#e6f7fb" fill-opacity="0.72"/><circle cx="209.89" cy="138.99" r="5" fill="url(#halopink)" opacity="0.55"/><circle cx="209.89" cy="138.99" r="1.6" fill="#d8eef4" fill-opacity="0.35"/><circle cx="226.46" cy="89.90" r="5" fill="url(#halopink)" opacity="0.55"/><circle cx="226.46" cy="89.90" r="1.6" fill="#d8eef4" fill-opacity="0.35"/></svg>
<div class="t" style="left:898.10px;top:960.45px;font-size:12.7px;color:#f87171">Current</div>
<div class="t" style="left:896.50px;top:960.45px;font-size:12.7px;color:#34d399">MCMC</div>
<div class="t" style="left:755.60px;top:1088.84px;font-size:10px;color:rgba(229,231,235,0.45)">0.04</div>
<div class="t" style="left:1006.60px;top:1088.84px;font-size:10px;color:rgba(229,231,235,0.45)">0.57</div>
<div class="a" style="left:747px;top:1108.0px;width:540.5px;height:14px;display:flex;justify-content:space-between;font-size:11.5px;line-height:14px;white-space:nowrap"><span style="color:#f87171">Now: <b style="color:#fca5a5">0.3</b></span><b style="color:#34d399;font-size:12.4px">0.298±0.141</b><span style="color:#a855f7;font-size:11px">[0.045,0.57]</span></div>
<svg class="a" style="left:160px;top:1157px;" width="15" height="15" viewBox="0 0 15 15"><rect x="0" y="0" width="15" height="15" rx="1" fill="#ddd7e6"/><rect x="5.3" y="0" width="0.6" height="15" fill="#c9c2d3"/><rect x="10.4" y="0" width="0.6" height="15" fill="#c9c2d3"/><rect x="0.9" y="3.7" width="4.1" height="11.1" rx="0.6" fill="#8ede78"/><rect x="6" y="8" width="3.6" height="7" rx="0.6" fill="#e8336e"/><rect x="11" y="2" width="3.3" height="13" rx="0.6" fill="#3a97ea"/></svg>
<div class="t" style="left:182.30px;top:1156.88px;font-size:15.5px;color:#22d3ee"><b>MCMC Parameters</b></div>
<div class="a" style="left:2416px;top:1157px;width:15px;height:15px;border:1.5px solid #6b7280;border-radius:3px;background:#fff"></div>
<div class="t" style="left:2439.50px;top:1158.15px;font-size:14px;color:#9ca3af">All</div>
<div class="t" style="left:192.40px;top:1195.30px;font-size:15px;color:#9ca3af"><b>Parameter</b></div>
<div class="t" style="left:998.00px;transform:translateX(-50%);top:1195.30px;font-size:15px;color:#f87171"><b>Current</b></div>
<div class="t" style="left:1218.00px;transform:translateX(-50%);top:1195.30px;font-size:15px;color:#10b981"><b>MCMC</b></div>
<div class="t" style="left:1414.70px;transform:translateX(-50%);top:1195.30px;font-size:15px;color:#9ca3af"><b>±SD</b></div>
<div class="t" style="left:1745.70px;transform:translateX(-50%);top:1195.30px;font-size:15px;color:#9333ea"><b>HDI 95%</b></div>
<div class="t" style="left:2078.50px;transform:translateX(-50%);top:1195.30px;font-size:15px;color:#9ca3af"><b>R&#770;</b></div>
<div class="t" style="left:2312.80px;transform:translateX(-50%);top:1195.30px;font-size:15px;color:#9ca3af"><b>Δ</b></div>
<div class="a" style="left:158px;top:1219.5px;width:2297px;height:1.6px;background:#374151"></div>
<div class="a" style="left:163px;top:1229.0px;width:15px;height:15px;border:1.5px solid #6b7280;border-radius:3px;background:#fff"></div>
<div class="t" style="left:192.40px;top:1231.97px;font-size:14.8px;color:#374151"><b>Game Changer</b></div>
<div class="t mono" style="left:998.00px;transform:translateX(-50%);top:1232.90px;font-size:13.7px;color:#ef4444">5</div>
<div class="t mono" style="left:1218.00px;transform:translateX(-50%);top:1232.90px;font-size:13.7px;color:#059669"><b>3.934</b></div>
<div class="t mono" style="left:1414.70px;transform:translateX(-50%);top:1232.90px;font-size:13.7px;color:#9ca3af">1.443</div>
<div class="t mono" style="left:1745.70px;transform:translateX(-50%);top:1232.90px;font-size:13.7px;color:#9333ea">[1.42, 6.767]</div>
<div class="t mono" style="left:2078.50px;transform:translateX(-50%);top:1232.90px;font-size:13.7px;color:#34d399">1.002</div>
<svg class="a" style="left:2284.5px;top:1232.0px;" width="10" height="13" viewBox="0 0 10 13"><path d="M5 1 V11 M1 7 L5 11 L9 7" fill="none" stroke="#f2566f" stroke-width="1.8" stroke-linecap="round" stroke-linejoin="round"/></svg>
<div class="t" style="left:2299.00px;top:1231.38px;font-size:15.5px;color:#f2566f"><b>-1.066</b></div>
<div class="a" style="left:163px;top:1265.5px;width:15px;height:15px;border:1.5px solid #6b7280;border-radius:3px;background:#fff"></div>
<div class="t" style="left:192.40px;top:1268.47px;font-size:14.8px;color:#374151"><b>Strong Affirmation</b></div>
<div class="t mono" style="left:998.00px;transform:translateX(-50%);top:1269.40px;font-size:13.7px;color:#ef4444">1</div>
<div class="t mono" style="left:1218.00px;transform:translateX(-50%);top:1269.40px;font-size:13.7px;color:#059669"><b>2.618</b></div>
<div class="t mono" style="left:1414.70px;transform:translateX(-50%);top:1269.40px;font-size:13.7px;color:#9ca3af">1.17</div>
<div class="t mono" style="left:1745.70px;transform:translateX(-50%);top:1269.40px;font-size:13.7px;color:#9333ea">[0.842, 4.939]</div>
<div class="t mono" style="left:2078.50px;transform:translateX(-50%);top:1269.40px;font-size:13.7px;color:#34d399">1.002</div>
<svg class="a" style="left:2284.5px;top:1268.5px;" width="10" height="13" viewBox="0 0 10 13"><path d="M5 12 V2 M1 6 L5 2 L9 6" fill="none" stroke="#34d399" stroke-width="1.8" stroke-linecap="round" stroke-linejoin="round"/></svg>
<div class="t" style="left:2299.00px;top:1267.88px;font-size:15.5px;color:#34d399"><b>+1.618</b></div>
<div class="a" style="left:158px;top:1257px;width:2297px;height:1px;background:#e5e7eb"></div>
<div class="a" style="left:63px;top:1290px;width:2492px;height:95px;background:#fff;border-top:1px solid #e5e7eb"></div>
<div class="a" style="left:558px;top:1321px;width:40px;height:40px;background:#e7f7f0;border:1px solid #aee6cc;border-radius:12px"></div>
<svg class="a" style="left:568px;top:1331px;" width="20" height="20" viewBox="0 0 20 20"><circle cx="10" cy="10" r="8.3" fill="none" stroke="#10b981" stroke-width="1.8"/><path d="M6.5 10.3 L9 12.5 L13.5 7.8" fill="none" stroke="#10b981" stroke-width="1.8" stroke-linecap="round" stroke-linejoin="round"/></svg>
<div class="t" style="left:613.40px;top:1330.38px;font-size:22px;color:#059669"><b>1</b></div>
<div class="t" style="left:635.00px;top:1334.14px;font-size:17.55px;color:#6b7280">parameters selected</div>
<div class="a" style="left:1747px;top:1311px;width:250.5px;height:60px;border-radius:18px;background:linear-gradient(90deg,#10b981 0%,#14b8a6 100%);box-shadow:0 8px 18px rgba(16,185,129,.22)"></div>
<svg class="a" style="left:1787.3px;top:1326.3px;" width="29.5" height="29.5" viewBox="0 0 24 24"><g fill="none" stroke="#fff" stroke-width="2" stroke-linecap="round" stroke-linejoin="round"><path d="M21.801 10A10 10 0 1 1 17 3.335"/><path d="m9 11 3 3L22 4"/></g></svg>
<div class="t" style="left:1830.50px;top:1333.26px;font-size:18px;color:#fff"><b>Apply selected</b></div>
<div class="a" style="left:2521px;top:900px;width:6px;height:345px;background:#e3e4e8;border-radius:3px"></div>
<div class="a" style="left:2505px;top:0px;width:50px;height:1385px;background:linear-gradient(90deg,rgba(71,85,105,0) 0%,rgba(71,85,105,.02) 40%,rgba(71,85,105,.07) 75%,rgba(71,85,105,.15) 100%)"></div>
</body></html>
